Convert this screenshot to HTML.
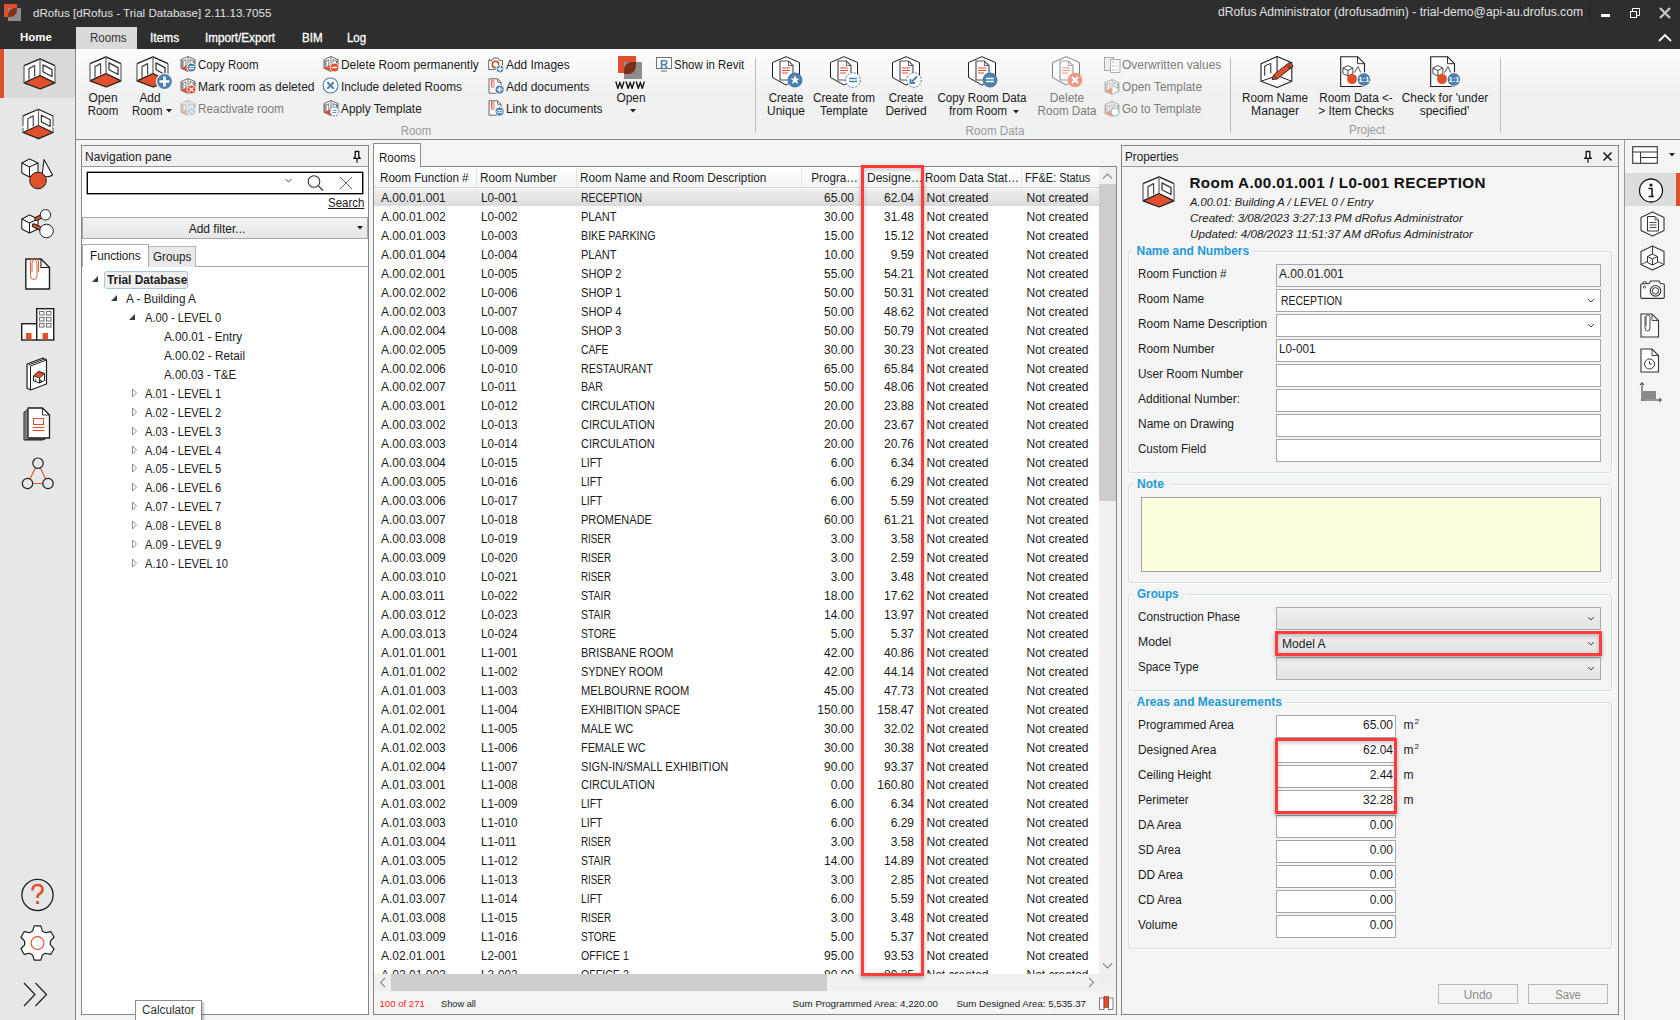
<!DOCTYPE html><html><head><meta charset="utf-8"><title>dRofus</title><style>
*{margin:0;padding:0;box-sizing:border-box}
html,body{width:1680px;height:1020px;overflow:hidden}
body{position:relative;background:#f0f0f0;font-family:"Liberation Sans",sans-serif;font-size:12px;color:#1b1b1b}
.a{position:absolute;white-space:nowrap}
.tb{position:absolute;left:0;top:0;width:1680px;height:49px;background:#2e2e2e}
.sb{position:absolute;left:0;top:49px;width:75px;height:971px;background:#e6e8e7}
.rib{position:absolute;left:76px;top:49px;width:1604px;height:91px;background:linear-gradient(#fdfdfd,#f1f1f1 48%,#f0f1f1);border-bottom:1px solid #858585}
.main{position:absolute;left:76px;top:140px;width:1604px;height:880px;background:#f4f4f4}
.menu{position:absolute;top:30px;color:#fff;font-size:12px}
.rl{color:#1b1b1b;font-size:12px;line-height:13.5px;text-align:center}
.sm{font-size:12px;color:#1b1b1b}
.dis{color:#8c8c8c}
.grp{color:#9a9a9a;font-size:12px}
.vsep{position:absolute;width:1px;background:#bdbdbd}
.panel{position:absolute;border:1px solid #8a8a8a;background:#fff}
.hdr{position:absolute;background:#f0f0f0}
.row{position:absolute;left:0;height:19px;width:100%}
.c{position:absolute;top:3px;white-space:nowrap}
.r{text-align:right}
.lbl{position:absolute;white-space:nowrap;color:#1b1b1b}
.inp{position:absolute;background:#fff;border:1px solid #a6a6a6;height:21px}
.ttl{position:absolute;color:#1d9bd7;font-weight:bold;font-size:12px;white-space:nowrap}
.gb{position:absolute;border:1px solid #d6dfe6;border-radius:3px}
</style></head><body><svg width="0" height="0" style="position:absolute">
<defs>
<symbol id="room" viewBox="0 0 33 32">
<path d="M1 7.7 L17 0.8 L32 7.7 V24.8 L17.2 31 L1 24.8 Z" fill="#fff"/>
<path d="M1 24.8 L17 17.5 L32 24.8 L17.2 31 Z" fill="#e0502c" stroke="#1e1e1e" stroke-width="1.3" stroke-linejoin="round"/>
<path d="M1 7.7 L17 0.8 L32 7.7" fill="none" stroke="#1e1e1e" stroke-width="1.3" stroke-linejoin="round"/>
<path d="M1 7.7 V24.8 M32 7.7 V24.8 M17 0.8 V17.5" fill="none" stroke="#6a6c6c" stroke-width="1.3"/>
<path d="M6 21.6 V10.6 L11.6 7.6 V18.6" fill="none" stroke="#4a4a4a" stroke-width="1.25" stroke-linejoin="round"/>
<path d="M20 6.9 L29 11.6 V18.5 L20 13.8 Z" fill="none" stroke="#333" stroke-width="1.25" stroke-linejoin="round"/>
</symbol>

<symbol id="sroom" viewBox="0 0 16 16">
<path d="M1 3.6 L8 0.6 L15 3.6 V12.4 L8 15.4 L1 12.4 Z" fill="#fff" stroke="#2a2a2a" stroke-width="0.7"/>
<path d="M8 0.6 V9 M3 11 V5 L5.8 3.8 V10 M10 3.5 L13.5 5.2 V9 L10 7.3 Z M2 4 V12 M14 4 V12" fill="none" stroke="#444" stroke-width="0.7"/>
<path d="M1 12.2 L8.3 8.6 V15.3 Z" fill="#e0502c"/>
</symbol>
<symbol id="hexdoc" viewBox="0 0 30 32">
<path d="M15 0.7 L28.5 6.5 V21.5 L15 29 L1.5 21.5 V6.5 Z" fill="#fff" stroke="#1e1e1e" stroke-width="1"/>
<path d="M9 5 H17.5 L22 9.5 V24 H9 Z" fill="#fff" stroke="#555" stroke-width="1.2"/>
<path d="M17.5 5 V9.5 H22" fill="none" stroke="#555" stroke-width="0.9"/>
<path d="M11 12 H19 M11 14.5 H19 M11 17 H17" stroke="#e0502c" stroke-width="1"/>
</symbol>
<symbol id="sdoc" viewBox="0 0 16 16">
<path d="M1 0.8 H9.5 L13 4.3 V15.2 H1 Z" fill="#fff" stroke="#555" stroke-width="0.9"/>
<path d="M9.5 0.8 V4.3 H13" fill="none" stroke="#555" stroke-width="0.8"/>
<path d="M4 8 V2.5 Q5 1 6 2.5 V9 Q5 10.5 3.5 9 V1.5" fill="none" stroke="#e0502c" stroke-width="0.8"/>
</symbol>
<symbol id="bigdoc" viewBox="0 0 32 32">
<path d="M0.7 0.7 H17.5 L24.5 7.7 V30.5 H0.7 Z" fill="#fff" stroke="#1e1e1e" stroke-width="1.1" stroke-linejoin="round"/>
<path d="M17.5 0.7 V7.7 H24.5" fill="none" stroke="#1e1e1e" stroke-width="0.9"/>
<path d="M7.9 9.6 L12.9 12 V17.5 L7.9 20 L2.9 17.5 V12 Z M2.9 12 L7.9 14.5 L12.9 12 M7.9 14.5 V20" fill="#fff" stroke="#333" stroke-width="0.9" stroke-linejoin="round"/>
<path d="M14.3 16.7 L17.9 10.6 L20.7 16.4" fill="none" stroke="#333" stroke-width="0.9"/>
<circle cx="12.1" cy="23.1" r="5" fill="#e0502c"/>
<circle cx="23.9" cy="23.5" r="6.8" fill="#4a7fae" stroke="#fff" stroke-width="1"/>
<text x="23.9" y="26.3" font-family="Liberation Sans" font-size="7.5" font-weight="bold" fill="#fff" text-anchor="middle">1:1</text>
</symbol>
</defs></svg><div class="tb"></div>
<div class="a" style="left:4px;top:4px;width:13px;height:13px;background:#e0502c"></div>
<div class="a" style="left:8px;top:8px;width:13px;height:13px;background:#8d8d8d"></div>
<div class="a" style="left:8px;top:8px;width:9px;height:9px;background:#83301c;border-radius:7px 0 7px 0"></div>
<div class="a " style="left:33px;top:6px;font-size:11.8px;line-height:1.2;color:#e2e2e2;transform:scaleX(0.9834);transform-origin:left">dRofus [dRofus - Trial Database] 2.11.13.7055</div>
<div class="a " style="left:1083px;width:500px;top:5.45px;font-size:12.2px;line-height:1.2;text-align:right;color:#e2e2e2;transform:scaleX(0.9953);transform-origin:right">dRofus Administrator (drofusadmin) - trial-demo@api-au.drofus.com</div>
<div class="a" style="left:1589px;top:5px;width:1px;height:14px;background:#1e1e1e"></div>
<div class="a" style="left:1601px;top:14px;width:9px;height:3px;background:#fff"></div>
<svg class="a" style="left:1629px;top:7px;" width="12" height="12" viewBox="0 0 12 12"><rect x="1.5" y="4.5" width="6" height="6" fill="none" stroke="#fff" stroke-width="1"/><path d="M3.5 4.5 V1.5 H10.5 V8.5 H7.5" fill="none" stroke="#fff" stroke-width="1"/></svg>
<svg class="a" style="left:1658px;top:6px;" width="14" height="14" viewBox="0 0 14 14"><path d="M2 2 L12 12 M12 2 L2 12" stroke="#c9c9c9" stroke-width="2.2"/></svg>
<svg class="a" style="left:1657px;top:31px;" width="16" height="12" viewBox="0 0 16 12"><path d="M2 10 L8 4 L14 10" fill="none" stroke="#fff" stroke-width="1.8"/></svg>
<div class="a " style="left:20px;top:31px;font-size:12px;line-height:1.2;color:#fff;font-weight:bold;font-size:11.5px">Home</div>
<div class="a" style="left:76px;top:27px;width:61px;height:22px;background:#d9dad9"></div>
<div class="a " style="left:89.5px;top:31px;font-size:12px;line-height:1.2;color:#333;transform:scaleX(0.9605);transform-origin:left">Rooms</div>
<div class="a " style="left:150px;top:31px;font-size:12px;line-height:1.2;color:#fff;-webkit-text-stroke:0.3px #fff;transform:scaleX(0.9932);transform-origin:left">Items</div>
<div class="a " style="left:205px;top:31px;font-size:12px;line-height:1.2;color:#fff;-webkit-text-stroke:0.3px #fff;transform:scaleX(0.9722);transform-origin:left">Import/Export</div>
<div class="a " style="left:302px;top:31px;font-size:12px;line-height:1.2;color:#fff;-webkit-text-stroke:0.3px #fff;transform:scaleX(0.9625);transform-origin:left">BIM</div>
<div class="a " style="left:347px;top:31px;font-size:12px;line-height:1.2;color:#fff;-webkit-text-stroke:0.3px #fff;transform:scaleX(0.9550);transform-origin:left">Log</div>
<div class="sb"></div>
<div class="a" style="left:0px;top:49px;width:75px;height:49px;background:#d9dbda"></div>
<div class="a" style="left:0px;top:49px;width:4px;height:49px;background:#e0502c"></div>
<div class="a" style="left:75px;top:49px;width:1px;height:971px;background:#858585"></div>
<svg class="a" style="left:23px;top:58px;" width="33" height="32"><use href="#room"/></svg>
<svg class="a" style="left:22px;top:108px" width="32" height="32" viewBox="0 0 32 32"><use href="#room"/></svg>
<div class="a" style="left:22px;top:113px;width:2px;height:2px;background:#e6e8e7"></div>
<div class="a" style="left:22px;top:126px;width:2px;height:2px;background:#e6e8e7"></div>
<div class="a" style="left:53px;top:113px;width:2px;height:2px;background:#e6e8e7"></div>
<div class="a" style="left:53px;top:126px;width:2px;height:2px;background:#e6e8e7"></div>
<div class="a" style="left:31px;top:108px;width:2px;height:2px;background:#e6e8e7"></div>
<div class="a" style="left:44px;top:108px;width:2px;height:2px;background:#e6e8e7"></div>
<div class="a" style="left:31px;top:137px;width:2px;height:2px;background:#e6e8e7"></div>
<div class="a" style="left:44px;top:137px;width:2px;height:2px;background:#e6e8e7"></div>
<svg class="a" style="left:21px;top:158px;" width="33" height="32" viewBox="0 0 33 32"><path d="M23 1.5 L31.5 17 Q27 20 21 18 Z" fill="#fff" stroke="#1e1e1e" stroke-width="1.1" stroke-linejoin="round"/>
<path d="M8.5 1 L17 5 V15 L8.5 19 L0.8 15 V5 Z" fill="#fff" stroke="#1e1e1e" stroke-width="1.1" stroke-linejoin="round"/>
<path d="M0.8 5 L8.5 9 L17 5 M8.5 9 V19" fill="none" stroke="#1e1e1e" stroke-width="1.1"/>
<circle cx="17" cy="22.5" r="8.3" fill="#e0502c" stroke="#1e1e1e" stroke-width="1"/></svg>
<svg class="a" style="left:21px;top:209px;" width="33" height="32" viewBox="0 0 33 32"><path d="M8.5 6 L17 10 V20 L8.5 24 L0.8 20 V10 Z" fill="#fff" stroke="#1e1e1e" stroke-width="1.1" stroke-linejoin="round"/>
<path d="M0.8 10 L8.5 14 L17 10 M8.5 14 V24" fill="none" stroke="#1e1e1e" stroke-width="1.1"/>
<path d="M15.5 9.8 L22.5 6.5" stroke="#1e1e1e" stroke-width="4.4" stroke-linecap="round"/><path d="M15.5 9.8 L22.5 6.5" stroke="#e0502c" stroke-width="2.4" stroke-linecap="round"/>
<path d="M13 16.5 L21.5 20.5" stroke="#1e1e1e" stroke-width="4.4" stroke-linecap="round"/><path d="M13 16.5 L21.5 20.5" stroke="#e0502c" stroke-width="2.4" stroke-linecap="round"/>
<circle cx="24.5" cy="5.8" r="5.2" fill="#fff" stroke="#1e1e1e" stroke-width="1"/>
<circle cx="25.5" cy="22" r="6.8" fill="#fff" stroke="#1e1e1e" stroke-width="1"/></svg>
<svg class="a" style="left:25px;top:258px;" width="26" height="32" viewBox="0 0 26 32"><path d="M0.8 1 H16 L24.5 9.5 V31 H0.8 Z" fill="#fff" stroke="#1e1e1e" stroke-width="1.4" stroke-linejoin="round"/>
<path d="M16 1 V9.5 H24.5" fill="none" stroke="#1e1e1e" stroke-width="1.1"/>
<path d="M7 14 V5.5 Q7 2.5 9.5 1.5 Q12 2.5 12 5.5 V18 Q12 21.5 9 21.5 Q5.5 21.5 5.5 18 V3.5 Q5.5 0 9.5 -0.5 Q13.5 0 13.5 3.5 V14" fill="none" stroke="#e0502c" stroke-width="0.9"/></svg>
<svg class="a" style="left:21px;top:308px;" width="34" height="33" viewBox="0 0 34 33"><rect x="0.7" y="15.7" width="15" height="16.3" fill="#fff" stroke="#1e1e1e" stroke-width="1.4"/>
<rect x="15.7" y="0.7" width="17" height="31.3" fill="#fff" stroke="#1e1e1e" stroke-width="1.4"/>
<g fill="#fff" stroke="#777" stroke-width="1.1"><rect x="18.5" y="3.5" width="4.5" height="3.5"/><rect x="25.5" y="3.5" width="4.5" height="3.5"/><rect x="18.5" y="9.5" width="4.5" height="3.5"/><rect x="25.5" y="9.5" width="4.5" height="3.5"/><rect x="18.5" y="15.5" width="4.5" height="3.5"/><rect x="25.5" y="15.5" width="4.5" height="3.5"/></g>
<rect x="5" y="25" width="5.5" height="6.5" fill="#e0502c"/><rect x="21.5" y="25" width="5.5" height="6.5" fill="#e0502c"/></svg>
<svg class="a" style="left:26px;top:357px;" width="22" height="34" viewBox="0 0 22 34"><path d="M1 7 L17 1 L20.5 3 V27 L4.5 33 L1 31 Z" fill="#fff" stroke="#1e1e1e" stroke-width="1.2" stroke-linejoin="round"/>
<path d="M4.5 9 L20.5 3 M4.5 9 V33 M2.5 8 L18.5 2" fill="none" stroke="#1e1e1e" stroke-width="1"/>
<path d="M7.5 19 L12.5 14.5 L18.5 16.5 V23.5 L13.5 26 L7.5 24 Z" fill="#fff" stroke="#1e1e1e" stroke-width="1"/>
<path d="M7.5 19 L12.5 14.5 L18.5 16.5 L13.5 21 Z" fill="#e0502c" stroke="#1e1e1e" stroke-width="0.8"/><path d="M13.5 21 V26 M9.8 22 V24" stroke="#1e1e1e" stroke-width="0.9"/><path d="M15 22.5 V25" stroke="#1e1e1e" stroke-width="1.3"/></svg>
<svg class="a" style="left:23px;top:407px;" width="29" height="34" viewBox="0 0 29 34"><path d="M1 5 H5 V30.5 H20 V33 H1 Z" fill="#aaa" stroke="#1e1e1e" stroke-width="1"/>
<path d="M3 3 H5 V31 H22 V32.5 H3 Z" fill="#ccc" stroke="#1e1e1e" stroke-width="0.8"/>
<path d="M5 1 H19.5 L26.5 8 V31 H5 Z" fill="#fff" stroke="#1e1e1e" stroke-width="1.3" stroke-linejoin="round"/>
<path d="M19.5 1 V8 H26.5" fill="none" stroke="#1e1e1e" stroke-width="0.9"/>
<g fill="none" stroke="#e0502c" stroke-width="1"><rect x="10.5" y="11.5" width="10" height="6"/><path d="M9.5 20.5 H21.5 M9.5 23.5 H21.5"/></g></svg>
<svg class="a" style="left:21px;top:457px;" width="34" height="34" viewBox="0 0 34 34"><path d="M14.6 10.8 L8.9 21.9 M19.4 10.8 L24.6 21.9 M11.7 26.5 H21.8" fill="none" stroke="#e0502c" stroke-width="1.1"/>
<g fill="none" stroke="#1e1e1e" stroke-width="1.2"><circle cx="17" cy="6.2" r="5.2"/><circle cx="6.5" cy="26.5" r="5.2"/><circle cx="27" cy="26.5" r="5.2"/></g></svg>
<svg class="a" style="left:21px;top:878px;" width="34" height="34" viewBox="0 0 34 34"><circle cx="16.5" cy="17" r="15.6" fill="none" stroke="#1e1e1e" stroke-width="1.3"/>
<path d="M11.5 12.5 Q11.5 7 16.5 7 Q21.5 7 21.5 11.5 Q21.5 14.5 17.5 16.5 Q16.5 17.2 16.5 20" fill="none" stroke="#e0502c" stroke-width="2.6"/><rect x="15.1" y="23" width="2.8" height="3" fill="#e0502c"/></svg>
<svg class="a" style="left:20px;top:925px;" width="35" height="36" viewBox="0 0 35 36"><path d="M12.68 5.93 L14.19 0.81 L20.81 0.81 L22.32 5.93 L25.54 7.79 L30.73 6.55 L34.04 12.27 L30.37 16.14 L30.37 19.86 L34.04 23.73 L30.73 29.45 L25.54 28.21 L22.32 30.07 L20.81 35.19 L14.19 35.19 L12.68 30.07 L9.46 28.21 L4.27 29.45 L0.96 23.73 L4.63 19.86 L4.63 16.14 L0.96 12.27 L4.27 6.55 L9.46 7.79Z" fill="#fff" stroke="#1e1e1e" stroke-width="1.2" stroke-linejoin="round"/><circle cx="17.5" cy="18" r="6.4" fill="none" stroke="#e0502c" stroke-width="1.1"/></svg>
<svg class="a" style="left:23px;top:982px;" width="27" height="26" viewBox="0 0 27 26"><path d="M1 1 L12 12.5 L1 24 M12.5 1 L23.5 12.5 L12.5 24" fill="none" stroke="#1e1e1e" stroke-width="1.2"/></svg>
<div class="rib"></div>
<div class="main"></div>
<svg class="a" style="left:89px;top:56px;" width="33" height="32"><use href="#room"/></svg>
<div class="a " style="left:-47px;width:300px;top:91.04px;font-size:12px;line-height:1.2;text-align:center;;transform:scaleX(0.9898);transform-origin:center">Open</div>
<div class="a " style="left:-47px;width:300px;top:104.04px;font-size:12px;line-height:1.2;text-align:center;;transform:scaleX(0.9531);transform-origin:center">Room</div>
<svg class="a" style="left:136px;top:56px;" width="33" height="32"><use href="#room"/></svg>
<svg class="a" style="left:155px;top:72px;" width="19" height="19" viewBox="0 0 19 19"><circle cx="9.5" cy="9.5" r="8" fill="#4a7fae" stroke="#fff" stroke-width="1.2"/><path d="M9.5 4.5 V14.5 M4.5 9.5 H14.5" stroke="#fff" stroke-width="2.6"/></svg>
<div class="a " style="left:0px;width:300px;top:91.04px;font-size:12px;line-height:1.2;text-align:center;;transform:scaleX(0.9906);transform-origin:center">Add</div>
<div class="a " style="left:132px;top:104px;font-size:12px;line-height:1.2;;transform:scaleX(0.9531);transform-origin:left">Room</div>
<svg class="a" style="left:166px;top:109px;" width="6" height="4" viewBox="0 0 6 4"><path d="M0 0 H6 L3 3.5Z" fill="#222"/></svg>
<svg class="a" style="left:180px;top:56px;" width="16" height="16"><use href="#sroom"/></svg>
<svg class="a" style="left:186.0px;top:62.0px;" width="11.0" height="11.0" viewBox="0 0 11.0 11.0"><circle cx="5.5" cy="5.5" r="4.5" fill="#4a7fae" stroke="#fff" stroke-width="1"/><path d="M3 4.6 H8 M3 6.6 H8" stroke="#fff" stroke-width="1.1"/></svg>
<div class="a " style="left:198px;top:58px;font-size:12px;line-height:1.2;;transform:scaleX(0.9558);transform-origin:left">Copy Room</div>
<svg class="a" style="left:180px;top:78px;" width="16" height="16"><use href="#sroom"/></svg>
<svg class="a" style="left:186.0px;top:84.0px;" width="11.0" height="11.0" viewBox="0 0 11.0 11.0"><circle cx="5.5" cy="5.5" r="4.5" fill="#e0502c" stroke="#fff" stroke-width="1"/><path d="M3.5 3.5 L7.5 7.5 M7.5 3.5 L3.5 7.5" stroke="#fff" stroke-width="1.2"/></svg>
<div class="a " style="left:198px;top:80px;font-size:12px;line-height:1.2;;transform:scaleX(1.0043);transform-origin:left">Mark room as deleted</div>
<div class="a" style="left:180px;top:100px;opacity:.45"><svg width="16" height="16"><use href="#sroom"/></svg></div>
<svg class="a" style="left:186.0px;top:106.0px;" width="11.0" height="11.0" viewBox="0 0 11.0 11.0"><circle cx="5.5" cy="5.5" r="4.5" fill="#b9cfe0" stroke="#fff" stroke-width="1"/><path d="M3.5 3.5 L7.5 7.5 M7.5 3.5 L3.5 7.5" stroke="#fff" stroke-width="1"/></svg>
<div class="a " style="left:198px;top:102px;font-size:12px;line-height:1.2;color:#7c7c7c;transform:scaleX(0.9828);transform-origin:left">Reactivate room</div>
<svg class="a" style="left:323px;top:56px;" width="16" height="16"><use href="#sroom"/></svg>
<svg class="a" style="left:328.5px;top:62.0px;" width="11.0" height="11.0" viewBox="0 0 11.0 11.0"><circle cx="5.5" cy="5.5" r="4.5" fill="#e0502c" stroke="#fff" stroke-width="1"/><path d="M2.8 5.5 H8.2" stroke="#fff" stroke-width="1.6"/></svg>
<div class="a " style="left:341px;top:58px;font-size:12px;line-height:1.2;;transform:scaleX(0.9878);transform-origin:left">Delete Room permanently</div>
<svg class="a" style="left:322px;top:77px;" width="17" height="17" viewBox="0 0 17 17"><circle cx="8.5" cy="8.5" r="7.5" fill="#fff" stroke="#4a7fae" stroke-width="1.1"/><path d="M5.3 5.3 L11.7 11.7 M11.7 5.3 L5.3 11.7" stroke="#4a7fae" stroke-width="2"/></svg>
<div class="a " style="left:341px;top:80px;font-size:12px;line-height:1.2;;transform:scaleX(0.9861);transform-origin:left">Include deleted Rooms</div>
<svg class="a" style="left:323px;top:100px;" width="16" height="16"><use href="#sroom"/></svg>
<svg class="a" style="left:328.5px;top:106.0px;" width="11.0" height="11.0" viewBox="0 0 11.0 11.0"><circle cx="5.5" cy="5.5" r="4.5" fill="#fff" stroke="#4a7fae" stroke-width="1" stroke-dasharray="2 1.3"/><path d="M3.5 4.5 H7.5 M3.5 6.5 H7.5" stroke="#4a7fae" stroke-width="0.9"/></svg>
<div class="a " style="left:341px;top:102px;font-size:12px;line-height:1.2;;transform:scaleX(0.9866);transform-origin:left">Apply Template</div>
<svg class="a" style="left:488px;top:57px;" width="17" height="16" viewBox="0 0 17 16"><path d="M0.7 3.5 H4 L5.5 1 H10 L11.5 3.5 H14.5 V12.5 H0.7 Z" fill="#fff" stroke="#555" stroke-width="0.9"/><circle cx="7.5" cy="7.5" r="3.2" fill="none" stroke="#c0462a" stroke-width="1.5"/><path d="M1.5 2 V3" stroke="#555"/></svg>
<svg class="a" style="left:495px;top:64.4px;" width="10" height="10" viewBox="0 0 10 10"><circle cx="5" cy="5" r="4" fill="#4a7fae" stroke="#fff" stroke-width="1"/><path d="M5 2.5 V7.5 M2.5 5 H7.5" stroke="#fff" stroke-width="1.4"/></svg>
<div class="a " style="left:506px;top:58px;font-size:12px;line-height:1.2;;transform:scaleX(0.9938);transform-origin:left">Add Images</div>
<svg class="a" style="left:488px;top:78px;" width="16" height="16"><use href="#sdoc"/></svg>
<svg class="a" style="left:494.4px;top:83.9px;" width="11.2" height="11.2" viewBox="0 0 11.2 11.2"><circle cx="5.6" cy="5.6" r="4.6" fill="#4a7fae" stroke="#fff" stroke-width="1"/><path d="M5.6 3 V8.2 M3 5.6 H8.2" stroke="#fff" stroke-width="1.5"/></svg>
<div class="a " style="left:506px;top:80px;font-size:12px;line-height:1.2;">Add documents</div>
<svg class="a" style="left:488px;top:100px;" width="16" height="16"><use href="#sdoc"/></svg>
<svg class="a" style="left:494.4px;top:105.9px;" width="11.2" height="11.2" viewBox="0 0 11.2 11.2"><circle cx="5.6" cy="5.6" r="4.6" fill="#4a7fae" stroke="#fff" stroke-width="1"/><circle cx="4.2" cy="5.6" r="1.4" fill="none" stroke="#fff" stroke-width="0.9"/><circle cx="7" cy="5.6" r="1.4" fill="none" stroke="#fff" stroke-width="0.9"/></svg>
<div class="a " style="left:506px;top:102px;font-size:12px;line-height:1.2;;transform:scaleX(0.9908);transform-origin:left">Link to documents</div>
<div class="a" style="left:618px;top:56px;width:18px;height:17px;background:#e0502c"></div>
<div class="a" style="left:624px;top:62px;width:18px;height:17px;background:#8d8d8d"></div>
<div class="a" style="left:624px;top:62px;width:12px;height:12px;background:#7c2c19;border-radius:8px 0 8px 0"></div>
<svg class="a" style="left:615px;top:81px;" width="32" height="8" viewBox="0 0 32 8"><path d="M0.8 0.5 L2.9 7.3 L4.9 1.6 L6.9 7.3 L9.0 0.5" fill="none" stroke="#111" stroke-width="1.35" stroke-linejoin="miter"/><path d="M11.0 0.5 L13.1 7.3 L15.1 1.6 L17.1 7.3 L19.2 0.5" fill="none" stroke="#111" stroke-width="1.35" stroke-linejoin="miter"/><path d="M21.2 0.5 L23.299999999999997 7.3 L25.299999999999997 1.6 L27.299999999999997 7.3 L29.4 0.5" fill="none" stroke="#111" stroke-width="1.35" stroke-linejoin="miter"/></svg>
<div class="a " style="left:481px;width:300px;top:91.04px;font-size:12px;line-height:1.2;text-align:center;;transform:scaleX(0.9898);transform-origin:center">Open</div>
<svg class="a" style="left:630px;top:109px;" width="6" height="4" viewBox="0 0 6 4"><path d="M0 0 H6 L3 3.5Z" fill="#222"/></svg>
<svg class="a" style="left:656px;top:57px;" width="16" height="15" viewBox="0 0 16 15"><rect x="0.5" y="0.5" width="15" height="11" fill="#fff" stroke="#666" stroke-width="0.9"/><path d="M5 14 H11" stroke="#666"/><text x="8" y="10.5" font-family="Liberation Sans" font-size="11" font-weight="bold" fill="#4a7fae" text-anchor="middle">R</text></svg>
<div class="a " style="left:674px;top:58px;font-size:12px;line-height:1.2;;transform:scaleX(0.9564);transform-origin:left">Show in Revit</div>
<div class="vsep" style="left:755px;top:58px;height:75px"></div>
<div class="a grp" style="left:266px;width:300px;top:123.64px;font-size:12px;line-height:1.2;text-align:center;;transform:scaleX(0.9531);transform-origin:center">Room</div>
<svg class="a" style="left:771px;top:56px;" width="30" height="32"><use href="#hexdoc"/></svg>
<svg class="a" style="left:786.5px;top:71.5px;" width="16" height="16" viewBox="0 0 16 16"><circle cx="8" cy="8" r="7.5" fill="#4a7fae"/><path d="M8 3 L9.3 6.4 L12.8 6.4 L10 8.6 L11 12 L8 10 L5 12 L6 8.6 L3.2 6.4 L6.7 6.4 Z" fill="#fff"/></svg>
<div class="a " style="left:636px;width:300px;top:91.04px;font-size:12px;line-height:1.2;text-align:center;;transform:scaleX(0.9639);transform-origin:center">Create</div>
<div class="a " style="left:636px;width:300px;top:104.04px;font-size:12px;line-height:1.2;text-align:center;;transform:scaleX(0.9947);transform-origin:center">Unique</div>
<svg class="a" style="left:829px;top:56px;" width="30" height="32"><use href="#hexdoc"/></svg>
<svg class="a" style="left:844.5px;top:71.5px;" width="16" height="16" viewBox="0 0 16 16"><circle cx="8" cy="8" r="7.3" fill="#fff" stroke="#4a7fae" stroke-width="1" stroke-dasharray="2.2 1.3"/><path d="M4 6.5 H12 M4 9.5 H12" stroke="#4a7fae" stroke-width="1.6"/></svg>
<div class="a " style="left:694px;width:300px;top:91.04px;font-size:12px;line-height:1.2;text-align:center;;transform:scaleX(0.9795);transform-origin:center">Create from</div>
<div class="a " style="left:694px;width:300px;top:104.04px;font-size:12px;line-height:1.2;text-align:center;;transform:scaleX(0.9815);transform-origin:center">Template</div>
<svg class="a" style="left:890.5px;top:56px;" width="30" height="32"><use href="#hexdoc"/></svg>
<svg class="a" style="left:906.0px;top:71.5px;" width="16" height="16" viewBox="0 0 16 16"><circle cx="8" cy="8" r="7.3" fill="#fff" stroke="#4a7fae" stroke-width="1" stroke-dasharray="2.2 1.3"/><path d="M11 4.5 L6 9.5 M4.5 7 V11 H9" stroke="#4a7fae" stroke-width="1.8" fill="none"/></svg>
<div class="a " style="left:755.5px;width:300px;top:91.04px;font-size:12px;line-height:1.2;text-align:center;;transform:scaleX(0.9639);transform-origin:center">Create</div>
<div class="a " style="left:755.5px;width:300px;top:104.04px;font-size:12px;line-height:1.2;text-align:center;;transform:scaleX(0.9952);transform-origin:center">Derived</div>
<svg class="a" style="left:966.5px;top:56px;" width="30" height="32"><use href="#hexdoc"/></svg>
<svg class="a" style="left:982.0px;top:71.5px;" width="16" height="16" viewBox="0 0 16 16"><circle cx="8" cy="8" r="7.5" fill="#4a7fae"/><path d="M4 6.5 H12 M4 9.5 H12" stroke="#fff" stroke-width="1.6"/></svg>
<div class="a " style="left:831.5px;width:300px;top:91.04px;font-size:12px;line-height:1.2;text-align:center;;transform:scaleX(0.9674);transform-origin:center">Copy Room Data</div>
<div class="a " style="left:827.5px;width:300px;top:104.04px;font-size:12px;line-height:1.2;text-align:center;;transform:scaleX(0.9747);transform-origin:center">from Room</div>
<svg class="a" style="left:1013px;top:110px;" width="6" height="4" viewBox="0 0 6 4"><path d="M0 0 H6 L3 3.5Z" fill="#222"/></svg>
<div class="a" style="left:1051px;top:56px;opacity:.55"><svg width="30" height="32" viewBox="0 0 30 32"><use href="#hexdoc"/></svg></div>
<svg class="a" style="left:1067px;top:72px;" width="16" height="16" viewBox="0 0 16 16"><circle cx="8" cy="8" r="7.3" fill="#ec9a88"/><path d="M5 5 L11 11 M11 5 L5 11" stroke="#fff" stroke-width="2"/></svg>
<div class="a " style="left:916.5px;width:300px;top:91.04px;font-size:12px;line-height:1.2;text-align:center;color:#7c7c7c;transform:scaleX(0.9942);transform-origin:center">Delete</div>
<div class="a " style="left:916.5px;width:300px;top:104.04px;font-size:12px;line-height:1.2;text-align:center;color:#7c7c7c;transform:scaleX(0.9720);transform-origin:center">Room Data</div>
<svg class="a" style="left:1104px;top:57px;" width="17" height="16" viewBox="0 0 17 16"><rect x="0.5" y="0.5" width="9" height="13" fill="#eee" stroke="#999" stroke-width="0.8"/><rect x="6.5" y="2.5" width="9.5" height="13" fill="#fff" stroke="#999" stroke-width="0.8"/><path d="M8.5 5 H10 M8.5 9 H10 M8.5 13 H10" stroke="#e9a393" stroke-width="1.3"/><path d="M11.5 5 H14 M11.5 9 H14 M11.5 13 H14" stroke="#ccc" stroke-width="0.8"/></svg>
<div class="a " style="left:1122px;top:58px;font-size:12px;line-height:1.2;color:#7c7c7c">Overwritten values</div>
<div class="a" style="left:1104px;top:79px;opacity:.5"><svg width="16" height="16"><use href="#sroom"/></svg></div>
<div class="a " style="left:1122px;top:80px;font-size:12px;line-height:1.2;color:#7c7c7c;transform:scaleX(0.9852);transform-origin:left">Open Template</div>
<div class="a" style="left:1104px;top:101px;opacity:.5"><svg width="16" height="16"><use href="#sroom"/></svg></div>
<svg class="a" style="left:1110px;top:107px;" width="10" height="10" viewBox="0 0 10 10"><circle cx="5" cy="5" r="4" fill="#fff" stroke="#9bb8d0" stroke-width="1"/></svg>
<div class="a " style="left:1122px;top:102px;font-size:12px;line-height:1.2;color:#7c7c7c;transform:scaleX(0.9754);transform-origin:left">Go to Template</div>
<div class="a grp" style="left:844.5px;width:300px;top:123.64px;font-size:12px;line-height:1.2;text-align:center;;transform:scaleX(0.9720);transform-origin:center">Room Data</div>
<div class="vsep" style="left:1230px;top:58px;height:75px"></div>
<svg class="a" style="left:1260px;top:56px;" width="34" height="32" viewBox="0 0 34 32"><path d="M1 7.8 L17.1 0.5 L31.8 6.7 V25.3 L17.1 31.4 L1 25.3 Z" fill="#fff" stroke="#1e1e1e" stroke-width="1.1" stroke-linejoin="round"/>
<path d="M1 25.3 L17.1 19.6 L31.8 25.3 M17.1 0.5 V19.6" fill="none" stroke="#1e1e1e" stroke-width="1"/><path d="M17.1 1 V19" stroke="#777" stroke-width="1"/>
<path d="M4.7 19.6 V9.9 L10.8 7.4 V17.4" fill="none" stroke="#1e1e1e" stroke-width="1"/>
<path d="M12.1 23.5 L16.9 23.1 L33.2 10.3 L29.8 6.1 L13.6 18.9 Z" fill="#e0502c" stroke="#1e1e1e" stroke-width="0.9" stroke-linejoin="round"/>
<path d="M13.6 18.9 L16.9 23.1 M28.4 8.6 L31.3 12.2 M27.1 9.6 L30 13.2" fill="none" stroke="#1e1e1e" stroke-width="0.8"/></svg>
<div class="a " style="left:1125px;width:300px;top:91.04px;font-size:12px;line-height:1.2;text-align:center;;transform:scaleX(0.9807);transform-origin:center">Room Name</div>
<div class="a " style="left:1125px;width:300px;top:104.04px;font-size:12px;line-height:1.2;text-align:center;;transform:scaleX(1.0106);transform-origin:center">Manager</div>
<svg class="a" style="left:1340px;top:56px;" width="32" height="32"><use href="#bigdoc"/></svg>
<div class="a " style="left:1205.5px;width:300px;top:91.04px;font-size:12px;line-height:1.2;text-align:center;;transform:scaleX(0.9773);transform-origin:center">Room Data &lt;-</div>
<div class="a " style="left:1205.5px;width:300px;top:104.04px;font-size:12px;line-height:1.2;text-align:center;;transform:scaleX(0.9805);transform-origin:center">&gt; Item Checks</div>
<svg class="a" style="left:1430px;top:56px;" width="32" height="32"><use href="#bigdoc"/></svg>
<div class="a " style="left:1294.5px;width:300px;top:91.04px;font-size:12px;line-height:1.2;text-align:center;;transform:scaleX(0.9852);transform-origin:center">Check for &#x27;under</div>
<div class="a " style="left:1294.5px;width:300px;top:104.04px;font-size:12px;line-height:1.2;text-align:center;">specified&#x27;</div>
<div class="a grp" style="left:1216.5px;width:300px;top:122.64px;font-size:12px;line-height:1.2;text-align:center;;transform:scaleX(0.9652);transform-origin:center">Project</div>
<div class="vsep" style="left:1500px;top:58px;height:75px"></div>
<div class="a" style="left:81px;top:145px;width:288px;height:870px;background:#fff;border:1px solid #858585"></div>
<div class="a" style="left:82px;top:146px;width:286px;height:21px;background:#f0f0f0;border-bottom:1px solid #9a9a9a"></div>
<div class="a " style="left:85px;top:150px;font-size:12px;line-height:1.2;">Navigation pane</div>
<svg class="a" style="left:352px;top:150px;" width="10" height="13" viewBox="0 0 10 13"><path d="M3.2 1.5 H6.8 V7 L8.3 8.3 H1.7 L3.2 7 Z" fill="#fff" stroke="#111" stroke-width="1.3" stroke-linejoin="round"/><path d="M5 8.5 V12.8" stroke="#111" stroke-width="1.2"/></svg>
<div class="a" style="left:87px;top:172px;width:276px;height:22px;background:#fff;border:1px solid #000;box-shadow:0 0 0 0.4px #000"></div>
<svg class="a" style="left:284px;top:176px;" width="9" height="9" viewBox="0 0 9 9"><path d="M1.5 3 L4.5 6 L7.5 3" fill="none" stroke="#444" stroke-width="1"/></svg>
<svg class="a" style="left:306px;top:174px;" width="20" height="18" viewBox="0 0 20 18"><circle cx="8" cy="7.5" r="5.8" fill="none" stroke="#333" stroke-width="1.1"/><path d="M12.2 11.7 L17 16.5" stroke="#333" stroke-width="1.2"/></svg>
<svg class="a" style="left:338px;top:175px;" width="16" height="16" viewBox="0 0 16 16"><path d="M2 2 L14 14 M14 2 L2 14" stroke="#555" stroke-width="0.9"/></svg>
<div class="a " style="left:328px;top:196px;font-size:12px;line-height:1.2;text-decoration:underline;transform:scaleX(0.9553);transform-origin:left">Search</div>
<div class="a" style="left:82px;top:217px;width:286px;height:22px;background:linear-gradient(#f4f4f4,#e6e6e6);border:1px solid #a9a9a9"></div>
<div class="a " style="left:67px;width:300px;top:221.64px;font-size:12px;line-height:1.2;text-align:center;">Add filter...</div>
<svg class="a" style="left:357px;top:226px;" width="6" height="4" viewBox="0 0 6 4"><path d="M0 0 H6 L3 3.5Z" fill="#222"/></svg>
<div class="a" style="left:82px;top:266px;width:286px;height:1px;background:#a9a9a9"></div>
<div class="a" style="left:148px;top:246px;width:48px;height:21px;background:#e9e9e9;border:1px solid #b5b5b5;border-bottom:none"></div>
<div class="a" style="left:82px;top:244px;width:67px;height:23px;background:#fff;border:1px solid #a9a9a9;border-bottom:none"></div>
<div class="a " style="left:90px;top:249px;font-size:12px;line-height:1.2;;transform:scaleX(0.9750);transform-origin:left">Functions</div>
<div class="a " style="left:153px;top:250px;font-size:12px;line-height:1.2;;transform:scaleX(0.9720);transform-origin:left">Groups</div>
<div class="a" style="left:104px;top:271px;width:84px;height:18px;background:#efefef;border:1px solid #a6c5e6;border-radius:3px"></div>
<div class="a " style="left:107px;top:273px;font-size:12px;line-height:1.2;font-weight:bold;transform:scaleX(0.9865);transform-origin:left">Trial Database</div>
<svg class="a" style="left:91px;top:275px;" width="8" height="8" viewBox="0 0 8 8"><path d="M7 1 V7 H1 Z" fill="#3a3a3a"/></svg>
<div class="a " style="left:125.5px;top:292px;font-size:12px;line-height:1.2;;transform:scaleX(0.9790);transform-origin:left">A - Building A</div>
<svg class="a" style="left:110px;top:294px;" width="8" height="8" viewBox="0 0 8 8"><path d="M7 1 V7 H1 Z" fill="#3a3a3a"/></svg>
<div class="a " style="left:144.5px;top:311px;font-size:12px;line-height:1.2;;transform:scaleX(0.9259);transform-origin:left">A.00 - LEVEL 0</div>
<svg class="a" style="left:128px;top:313px;" width="8" height="8" viewBox="0 0 8 8"><path d="M7 1 V7 H1 Z" fill="#3a3a3a"/></svg>
<div class="a " style="left:164px;top:330px;font-size:12px;line-height:1.2;;transform:scaleX(0.9750);transform-origin:left">A.00.01 - Entry</div>
<div class="a " style="left:164px;top:349px;font-size:12px;line-height:1.2;;transform:scaleX(0.9794);transform-origin:left">A.00.02 - Retail</div>
<div class="a " style="left:164px;top:368px;font-size:12px;line-height:1.2;;transform:scaleX(0.9614);transform-origin:left">A.00.03 - T&amp;E</div>
<div class="a " style="left:144.5px;top:387px;font-size:12px;line-height:1.2;;transform:scaleX(0.9259);transform-origin:left">A.01 - LEVEL 1</div>
<svg class="a" style="left:131px;top:388px;" width="8" height="10" viewBox="0 0 8 10"><path d="M1.5 1 L5.5 5 L1.5 9 Z" fill="none" stroke="#8a8a8a" stroke-width="1"/></svg>
<div class="a " style="left:144.5px;top:406px;font-size:12px;line-height:1.2;;transform:scaleX(0.9259);transform-origin:left">A.02 - LEVEL 2</div>
<svg class="a" style="left:131px;top:407px;" width="8" height="10" viewBox="0 0 8 10"><path d="M1.5 1 L5.5 5 L1.5 9 Z" fill="none" stroke="#8a8a8a" stroke-width="1"/></svg>
<div class="a " style="left:144.5px;top:425px;font-size:12px;line-height:1.2;;transform:scaleX(0.9259);transform-origin:left">A.03 - LEVEL 3</div>
<svg class="a" style="left:131px;top:426px;" width="8" height="10" viewBox="0 0 8 10"><path d="M1.5 1 L5.5 5 L1.5 9 Z" fill="none" stroke="#8a8a8a" stroke-width="1"/></svg>
<div class="a " style="left:144.5px;top:444px;font-size:12px;line-height:1.2;;transform:scaleX(0.9259);transform-origin:left">A.04 - LEVEL 4</div>
<svg class="a" style="left:131px;top:445px;" width="8" height="10" viewBox="0 0 8 10"><path d="M1.5 1 L5.5 5 L1.5 9 Z" fill="none" stroke="#8a8a8a" stroke-width="1"/></svg>
<div class="a " style="left:144.5px;top:462px;font-size:12px;line-height:1.2;;transform:scaleX(0.9259);transform-origin:left">A.05 - LEVEL 5</div>
<svg class="a" style="left:131px;top:463px;" width="8" height="10" viewBox="0 0 8 10"><path d="M1.5 1 L5.5 5 L1.5 9 Z" fill="none" stroke="#8a8a8a" stroke-width="1"/></svg>
<div class="a " style="left:144.5px;top:481px;font-size:12px;line-height:1.2;;transform:scaleX(0.9259);transform-origin:left">A.06 - LEVEL 6</div>
<svg class="a" style="left:131px;top:482px;" width="8" height="10" viewBox="0 0 8 10"><path d="M1.5 1 L5.5 5 L1.5 9 Z" fill="none" stroke="#8a8a8a" stroke-width="1"/></svg>
<div class="a " style="left:144.5px;top:500px;font-size:12px;line-height:1.2;;transform:scaleX(0.9259);transform-origin:left">A.07 - LEVEL 7</div>
<svg class="a" style="left:131px;top:501px;" width="8" height="10" viewBox="0 0 8 10"><path d="M1.5 1 L5.5 5 L1.5 9 Z" fill="none" stroke="#8a8a8a" stroke-width="1"/></svg>
<div class="a " style="left:144.5px;top:519px;font-size:12px;line-height:1.2;;transform:scaleX(0.9259);transform-origin:left">A.08 - LEVEL 8</div>
<svg class="a" style="left:131px;top:520px;" width="8" height="10" viewBox="0 0 8 10"><path d="M1.5 1 L5.5 5 L1.5 9 Z" fill="none" stroke="#8a8a8a" stroke-width="1"/></svg>
<div class="a " style="left:144.5px;top:538px;font-size:12px;line-height:1.2;;transform:scaleX(0.9259);transform-origin:left">A.09 - LEVEL 9</div>
<svg class="a" style="left:131px;top:539px;" width="8" height="10" viewBox="0 0 8 10"><path d="M1.5 1 L5.5 5 L1.5 9 Z" fill="none" stroke="#8a8a8a" stroke-width="1"/></svg>
<div class="a " style="left:144.5px;top:557px;font-size:12px;line-height:1.2;;transform:scaleX(0.9314);transform-origin:left">A.10 - LEVEL 10</div>
<svg class="a" style="left:131px;top:558px;" width="8" height="10" viewBox="0 0 8 10"><path d="M1.5 1 L5.5 5 L1.5 9 Z" fill="none" stroke="#8a8a8a" stroke-width="1"/></svg>
<div class="a" style="left:135px;top:1000px;width:67px;height:22px;background:#fff;border:1px solid #8c8c8c;box-shadow:2px 2px 2px rgba(0,0,0,.25)"></div>
<div class="a " style="left:142px;top:1003px;font-size:12px;line-height:1.2;color:#333;transform:scaleX(0.9759);transform-origin:left">Calculator</div>
<div class="a" style="left:373px;top:166px;width:744px;height:849px;background:#fff;border:1px solid #858585"></div>
<div class="a" style="left:373px;top:143px;width:48px;height:24px;background:#fff;border:1px solid #8c8c8c;border-bottom:none"></div>
<div class="a " style="left:379px;top:151px;font-size:12px;line-height:1.2;;transform:scaleX(0.9605);transform-origin:left">Rooms</div>
<div class="a" style="left:374px;top:167px;width:725px;height:21px;background:linear-gradient(#fff,#f3f5f6);border-bottom:1px solid #d6d6d6"></div>
<div class="a" style="left:476px;top:168px;width:1px;height:18px;background:#e2e2e2"></div>
<div class="a" style="left:576px;top:168px;width:1px;height:18px;background:#e2e2e2"></div>
<div class="a" style="left:801px;top:168px;width:1px;height:18px;background:#e2e2e2"></div>
<div class="a" style="left:862px;top:168px;width:1px;height:18px;background:#e2e2e2"></div>
<div class="a" style="left:921px;top:168px;width:1px;height:18px;background:#e2e2e2"></div>
<div class="a" style="left:1021px;top:168px;width:1px;height:18px;background:#e2e2e2"></div>
<div class="a " style="left:380px;top:171px;font-size:12px;line-height:1.2;;transform:scaleX(0.9694);transform-origin:left">Room Function #</div>
<div class="a " style="left:480px;top:171px;font-size:12px;line-height:1.2;;transform:scaleX(0.9833);transform-origin:left">Room Number</div>
<div class="a " style="left:579.5px;top:171px;font-size:12px;line-height:1.2;;transform:scaleX(0.9842);transform-origin:left">Room Name and Room Description</div>
<div class="a " style="left:357.5px;width:500px;top:170.64px;font-size:12px;line-height:1.2;text-align:right;;transform:scaleX(0.9729);transform-origin:right">Progra…</div>
<div class="a " style="left:867px;top:171px;font-size:12px;line-height:1.2;">Designe…</div>
<div class="a " style="left:924.5px;top:171px;font-size:12px;line-height:1.2;;transform:scaleX(0.9651);transform-origin:left">Room Data Stat…</div>
<div class="a " style="left:1024.5px;top:171px;font-size:12px;line-height:1.2;;transform:scaleX(0.9145);transform-origin:left">FF&amp;E: Status</div>
<div class="a" style="left:374px;top:188px;width:725px;height:786px;overflow:hidden">
<div class="a" style="left:0px;top:0.5px;width:725px;height:17px;background:linear-gradient(#efefef,#e4e4e4 60%,#d9d9d9)"></div>
<div class="a " style="left:7px;top:3px;font-size:12px;line-height:1.2;">A.00.01.001</div>
<div class="a " style="left:107px;top:3px;font-size:12px;line-height:1.2;;transform:scaleX(0.9759);transform-origin:left">L0-001</div>
<div class="a " style="left:206.5px;top:3px;font-size:12px;line-height:1.2;;transform:scaleX(0.8729);transform-origin:left">RECEPTION</div>
<div class="a " style="left:-20px;width:500px;top:3.00px;font-size:12px;line-height:1.2;text-align:right;">65.00</div>
<div class="a " style="left:40px;width:500px;top:3.00px;font-size:12px;line-height:1.2;text-align:right;">62.04</div>
<div class="a " style="left:552.5px;top:3px;font-size:12px;line-height:1.2;">Not created</div>
<div class="a " style="left:652.5px;top:3px;font-size:12px;line-height:1.2;">Not created</div>
<div class="a " style="left:7px;top:22px;font-size:12px;line-height:1.2;">A.00.01.002</div>
<div class="a " style="left:107px;top:22px;font-size:12px;line-height:1.2;;transform:scaleX(0.9759);transform-origin:left">L0-002</div>
<div class="a " style="left:206.5px;top:22px;font-size:12px;line-height:1.2;;transform:scaleX(0.9199);transform-origin:left">PLANT</div>
<div class="a " style="left:-20px;width:500px;top:22.00px;font-size:12px;line-height:1.2;text-align:right;">30.00</div>
<div class="a " style="left:40px;width:500px;top:22.00px;font-size:12px;line-height:1.2;text-align:right;">31.48</div>
<div class="a " style="left:552.5px;top:22px;font-size:12px;line-height:1.2;">Not created</div>
<div class="a " style="left:652.5px;top:22px;font-size:12px;line-height:1.2;">Not created</div>
<div class="a " style="left:7px;top:41px;font-size:12px;line-height:1.2;">A.00.01.003</div>
<div class="a " style="left:107px;top:41px;font-size:12px;line-height:1.2;;transform:scaleX(0.9759);transform-origin:left">L0-003</div>
<div class="a " style="left:206.5px;top:41px;font-size:12px;line-height:1.2;;transform:scaleX(0.8902);transform-origin:left">BIKE PARKING</div>
<div class="a " style="left:-20px;width:500px;top:41.00px;font-size:12px;line-height:1.2;text-align:right;">15.00</div>
<div class="a " style="left:40px;width:500px;top:41.00px;font-size:12px;line-height:1.2;text-align:right;">15.12</div>
<div class="a " style="left:552.5px;top:41px;font-size:12px;line-height:1.2;">Not created</div>
<div class="a " style="left:652.5px;top:41px;font-size:12px;line-height:1.2;">Not created</div>
<div class="a " style="left:7px;top:60px;font-size:12px;line-height:1.2;">A.00.01.004</div>
<div class="a " style="left:107px;top:60px;font-size:12px;line-height:1.2;;transform:scaleX(0.9759);transform-origin:left">L0-004</div>
<div class="a " style="left:206.5px;top:60px;font-size:12px;line-height:1.2;;transform:scaleX(0.9199);transform-origin:left">PLANT</div>
<div class="a " style="left:-20px;width:500px;top:60.00px;font-size:12px;line-height:1.2;text-align:right;">10.00</div>
<div class="a " style="left:40px;width:500px;top:60.00px;font-size:12px;line-height:1.2;text-align:right;">9.59</div>
<div class="a " style="left:552.5px;top:60px;font-size:12px;line-height:1.2;">Not created</div>
<div class="a " style="left:652.5px;top:60px;font-size:12px;line-height:1.2;">Not created</div>
<div class="a " style="left:7px;top:79px;font-size:12px;line-height:1.2;">A.00.02.001</div>
<div class="a " style="left:107px;top:79px;font-size:12px;line-height:1.2;;transform:scaleX(0.9759);transform-origin:left">L0-005</div>
<div class="a " style="left:206.5px;top:79px;font-size:12px;line-height:1.2;;transform:scaleX(0.9224);transform-origin:left">SHOP 2</div>
<div class="a " style="left:-20px;width:500px;top:79.00px;font-size:12px;line-height:1.2;text-align:right;">55.00</div>
<div class="a " style="left:40px;width:500px;top:79.00px;font-size:12px;line-height:1.2;text-align:right;">54.21</div>
<div class="a " style="left:552.5px;top:79px;font-size:12px;line-height:1.2;">Not created</div>
<div class="a " style="left:652.5px;top:79px;font-size:12px;line-height:1.2;">Not created</div>
<div class="a " style="left:7px;top:98px;font-size:12px;line-height:1.2;">A.00.02.002</div>
<div class="a " style="left:107px;top:98px;font-size:12px;line-height:1.2;;transform:scaleX(0.9759);transform-origin:left">L0-006</div>
<div class="a " style="left:206.5px;top:98px;font-size:12px;line-height:1.2;;transform:scaleX(0.9224);transform-origin:left">SHOP 1</div>
<div class="a " style="left:-20px;width:500px;top:98.00px;font-size:12px;line-height:1.2;text-align:right;">50.00</div>
<div class="a " style="left:40px;width:500px;top:98.00px;font-size:12px;line-height:1.2;text-align:right;">50.31</div>
<div class="a " style="left:552.5px;top:98px;font-size:12px;line-height:1.2;">Not created</div>
<div class="a " style="left:652.5px;top:98px;font-size:12px;line-height:1.2;">Not created</div>
<div class="a " style="left:7px;top:117px;font-size:12px;line-height:1.2;">A.00.02.003</div>
<div class="a " style="left:107px;top:117px;font-size:12px;line-height:1.2;;transform:scaleX(0.9759);transform-origin:left">L0-007</div>
<div class="a " style="left:206.5px;top:117px;font-size:12px;line-height:1.2;;transform:scaleX(0.9224);transform-origin:left">SHOP 4</div>
<div class="a " style="left:-20px;width:500px;top:117.00px;font-size:12px;line-height:1.2;text-align:right;">50.00</div>
<div class="a " style="left:40px;width:500px;top:117.00px;font-size:12px;line-height:1.2;text-align:right;">48.62</div>
<div class="a " style="left:552.5px;top:117px;font-size:12px;line-height:1.2;">Not created</div>
<div class="a " style="left:652.5px;top:117px;font-size:12px;line-height:1.2;">Not created</div>
<div class="a " style="left:7px;top:136px;font-size:12px;line-height:1.2;">A.00.02.004</div>
<div class="a " style="left:107px;top:136px;font-size:12px;line-height:1.2;;transform:scaleX(0.9759);transform-origin:left">L0-008</div>
<div class="a " style="left:206.5px;top:136px;font-size:12px;line-height:1.2;;transform:scaleX(0.9224);transform-origin:left">SHOP 3</div>
<div class="a " style="left:-20px;width:500px;top:136.00px;font-size:12px;line-height:1.2;text-align:right;">50.00</div>
<div class="a " style="left:40px;width:500px;top:136.00px;font-size:12px;line-height:1.2;text-align:right;">50.79</div>
<div class="a " style="left:552.5px;top:136px;font-size:12px;line-height:1.2;">Not created</div>
<div class="a " style="left:652.5px;top:136px;font-size:12px;line-height:1.2;">Not created</div>
<div class="a " style="left:7px;top:155px;font-size:12px;line-height:1.2;">A.00.02.005</div>
<div class="a " style="left:107px;top:155px;font-size:12px;line-height:1.2;;transform:scaleX(0.9759);transform-origin:left">L0-009</div>
<div class="a " style="left:206.5px;top:155px;font-size:12px;line-height:1.2;;transform:scaleX(0.8563);transform-origin:left">CAFE</div>
<div class="a " style="left:-20px;width:500px;top:155.00px;font-size:12px;line-height:1.2;text-align:right;">30.00</div>
<div class="a " style="left:40px;width:500px;top:155.00px;font-size:12px;line-height:1.2;text-align:right;">30.23</div>
<div class="a " style="left:552.5px;top:155px;font-size:12px;line-height:1.2;">Not created</div>
<div class="a " style="left:652.5px;top:155px;font-size:12px;line-height:1.2;">Not created</div>
<div class="a " style="left:7px;top:174px;font-size:12px;line-height:1.2;">A.00.02.006</div>
<div class="a " style="left:107px;top:174px;font-size:12px;line-height:1.2;;transform:scaleX(0.9759);transform-origin:left">L0-010</div>
<div class="a " style="left:206.5px;top:174px;font-size:12px;line-height:1.2;;transform:scaleX(0.8919);transform-origin:left">RESTAURANT</div>
<div class="a " style="left:-20px;width:500px;top:174.00px;font-size:12px;line-height:1.2;text-align:right;">65.00</div>
<div class="a " style="left:40px;width:500px;top:174.00px;font-size:12px;line-height:1.2;text-align:right;">65.84</div>
<div class="a " style="left:552.5px;top:174px;font-size:12px;line-height:1.2;">Not created</div>
<div class="a " style="left:652.5px;top:174px;font-size:12px;line-height:1.2;">Not created</div>
<div class="a " style="left:7px;top:192px;font-size:12px;line-height:1.2;">A.00.02.007</div>
<div class="a " style="left:107px;top:192px;font-size:12px;line-height:1.2;;transform:scaleX(0.9753);transform-origin:left">L0-011</div>
<div class="a " style="left:206.5px;top:192px;font-size:12px;line-height:1.2;;transform:scaleX(0.8865);transform-origin:left">BAR</div>
<div class="a " style="left:-20px;width:500px;top:192.00px;font-size:12px;line-height:1.2;text-align:right;">50.00</div>
<div class="a " style="left:40px;width:500px;top:192.00px;font-size:12px;line-height:1.2;text-align:right;">48.06</div>
<div class="a " style="left:552.5px;top:192px;font-size:12px;line-height:1.2;">Not created</div>
<div class="a " style="left:652.5px;top:192px;font-size:12px;line-height:1.2;">Not created</div>
<div class="a " style="left:7px;top:211px;font-size:12px;line-height:1.2;">A.00.03.001</div>
<div class="a " style="left:107px;top:211px;font-size:12px;line-height:1.2;;transform:scaleX(0.9759);transform-origin:left">L0-012</div>
<div class="a " style="left:206.5px;top:211px;font-size:12px;line-height:1.2;;transform:scaleX(0.9155);transform-origin:left">CIRCULATION</div>
<div class="a " style="left:-20px;width:500px;top:211.00px;font-size:12px;line-height:1.2;text-align:right;">20.00</div>
<div class="a " style="left:40px;width:500px;top:211.00px;font-size:12px;line-height:1.2;text-align:right;">23.88</div>
<div class="a " style="left:552.5px;top:211px;font-size:12px;line-height:1.2;">Not created</div>
<div class="a " style="left:652.5px;top:211px;font-size:12px;line-height:1.2;">Not created</div>
<div class="a " style="left:7px;top:230px;font-size:12px;line-height:1.2;">A.00.03.002</div>
<div class="a " style="left:107px;top:230px;font-size:12px;line-height:1.2;;transform:scaleX(0.9759);transform-origin:left">L0-013</div>
<div class="a " style="left:206.5px;top:230px;font-size:12px;line-height:1.2;;transform:scaleX(0.9155);transform-origin:left">CIRCULATION</div>
<div class="a " style="left:-20px;width:500px;top:230.00px;font-size:12px;line-height:1.2;text-align:right;">20.00</div>
<div class="a " style="left:40px;width:500px;top:230.00px;font-size:12px;line-height:1.2;text-align:right;">23.67</div>
<div class="a " style="left:552.5px;top:230px;font-size:12px;line-height:1.2;">Not created</div>
<div class="a " style="left:652.5px;top:230px;font-size:12px;line-height:1.2;">Not created</div>
<div class="a " style="left:7px;top:249px;font-size:12px;line-height:1.2;">A.00.03.003</div>
<div class="a " style="left:107px;top:249px;font-size:12px;line-height:1.2;;transform:scaleX(0.9759);transform-origin:left">L0-014</div>
<div class="a " style="left:206.5px;top:249px;font-size:12px;line-height:1.2;;transform:scaleX(0.9155);transform-origin:left">CIRCULATION</div>
<div class="a " style="left:-20px;width:500px;top:249.00px;font-size:12px;line-height:1.2;text-align:right;">20.00</div>
<div class="a " style="left:40px;width:500px;top:249.00px;font-size:12px;line-height:1.2;text-align:right;">20.76</div>
<div class="a " style="left:552.5px;top:249px;font-size:12px;line-height:1.2;">Not created</div>
<div class="a " style="left:652.5px;top:249px;font-size:12px;line-height:1.2;">Not created</div>
<div class="a " style="left:7px;top:268px;font-size:12px;line-height:1.2;">A.00.03.004</div>
<div class="a " style="left:107px;top:268px;font-size:12px;line-height:1.2;;transform:scaleX(0.9759);transform-origin:left">L0-015</div>
<div class="a " style="left:206.5px;top:268px;font-size:12px;line-height:1.2;;transform:scaleX(0.8662);transform-origin:left">LIFT</div>
<div class="a " style="left:-20px;width:500px;top:268.00px;font-size:12px;line-height:1.2;text-align:right;">6.00</div>
<div class="a " style="left:40px;width:500px;top:268.00px;font-size:12px;line-height:1.2;text-align:right;">6.34</div>
<div class="a " style="left:552.5px;top:268px;font-size:12px;line-height:1.2;">Not created</div>
<div class="a " style="left:652.5px;top:268px;font-size:12px;line-height:1.2;">Not created</div>
<div class="a " style="left:7px;top:287px;font-size:12px;line-height:1.2;">A.00.03.005</div>
<div class="a " style="left:107px;top:287px;font-size:12px;line-height:1.2;;transform:scaleX(0.9759);transform-origin:left">L0-016</div>
<div class="a " style="left:206.5px;top:287px;font-size:12px;line-height:1.2;;transform:scaleX(0.8662);transform-origin:left">LIFT</div>
<div class="a " style="left:-20px;width:500px;top:287.00px;font-size:12px;line-height:1.2;text-align:right;">6.00</div>
<div class="a " style="left:40px;width:500px;top:287.00px;font-size:12px;line-height:1.2;text-align:right;">6.29</div>
<div class="a " style="left:552.5px;top:287px;font-size:12px;line-height:1.2;">Not created</div>
<div class="a " style="left:652.5px;top:287px;font-size:12px;line-height:1.2;">Not created</div>
<div class="a " style="left:7px;top:306px;font-size:12px;line-height:1.2;">A.00.03.006</div>
<div class="a " style="left:107px;top:306px;font-size:12px;line-height:1.2;;transform:scaleX(0.9759);transform-origin:left">L0-017</div>
<div class="a " style="left:206.5px;top:306px;font-size:12px;line-height:1.2;;transform:scaleX(0.8662);transform-origin:left">LIFT</div>
<div class="a " style="left:-20px;width:500px;top:306.00px;font-size:12px;line-height:1.2;text-align:right;">6.00</div>
<div class="a " style="left:40px;width:500px;top:306.00px;font-size:12px;line-height:1.2;text-align:right;">5.59</div>
<div class="a " style="left:552.5px;top:306px;font-size:12px;line-height:1.2;">Not created</div>
<div class="a " style="left:652.5px;top:306px;font-size:12px;line-height:1.2;">Not created</div>
<div class="a " style="left:7px;top:325px;font-size:12px;line-height:1.2;">A.00.03.007</div>
<div class="a " style="left:107px;top:325px;font-size:12px;line-height:1.2;;transform:scaleX(0.9759);transform-origin:left">L0-018</div>
<div class="a " style="left:206.5px;top:325px;font-size:12px;line-height:1.2;;transform:scaleX(0.9173);transform-origin:left">PROMENADE</div>
<div class="a " style="left:-20px;width:500px;top:325.00px;font-size:12px;line-height:1.2;text-align:right;">60.00</div>
<div class="a " style="left:40px;width:500px;top:325.00px;font-size:12px;line-height:1.2;text-align:right;">61.21</div>
<div class="a " style="left:552.5px;top:325px;font-size:12px;line-height:1.2;">Not created</div>
<div class="a " style="left:652.5px;top:325px;font-size:12px;line-height:1.2;">Not created</div>
<div class="a " style="left:7px;top:344px;font-size:12px;line-height:1.2;">A.00.03.008</div>
<div class="a " style="left:107px;top:344px;font-size:12px;line-height:1.2;;transform:scaleX(0.9759);transform-origin:left">L0-019</div>
<div class="a " style="left:206.5px;top:344px;font-size:12px;line-height:1.2;;transform:scaleX(0.8173);transform-origin:left">RISER</div>
<div class="a " style="left:-20px;width:500px;top:344.00px;font-size:12px;line-height:1.2;text-align:right;">3.00</div>
<div class="a " style="left:40px;width:500px;top:344.00px;font-size:12px;line-height:1.2;text-align:right;">3.58</div>
<div class="a " style="left:552.5px;top:344px;font-size:12px;line-height:1.2;">Not created</div>
<div class="a " style="left:652.5px;top:344px;font-size:12px;line-height:1.2;">Not created</div>
<div class="a " style="left:7px;top:363px;font-size:12px;line-height:1.2;">A.00.03.009</div>
<div class="a " style="left:107px;top:363px;font-size:12px;line-height:1.2;;transform:scaleX(0.9759);transform-origin:left">L0-020</div>
<div class="a " style="left:206.5px;top:363px;font-size:12px;line-height:1.2;;transform:scaleX(0.8173);transform-origin:left">RISER</div>
<div class="a " style="left:-20px;width:500px;top:363.00px;font-size:12px;line-height:1.2;text-align:right;">3.00</div>
<div class="a " style="left:40px;width:500px;top:363.00px;font-size:12px;line-height:1.2;text-align:right;">2.59</div>
<div class="a " style="left:552.5px;top:363px;font-size:12px;line-height:1.2;">Not created</div>
<div class="a " style="left:652.5px;top:363px;font-size:12px;line-height:1.2;">Not created</div>
<div class="a " style="left:7px;top:382px;font-size:12px;line-height:1.2;">A.00.03.010</div>
<div class="a " style="left:107px;top:382px;font-size:12px;line-height:1.2;;transform:scaleX(0.9759);transform-origin:left">L0-021</div>
<div class="a " style="left:206.5px;top:382px;font-size:12px;line-height:1.2;;transform:scaleX(0.8173);transform-origin:left">RISER</div>
<div class="a " style="left:-20px;width:500px;top:382.00px;font-size:12px;line-height:1.2;text-align:right;">3.00</div>
<div class="a " style="left:40px;width:500px;top:382.00px;font-size:12px;line-height:1.2;text-align:right;">3.48</div>
<div class="a " style="left:552.5px;top:382px;font-size:12px;line-height:1.2;">Not created</div>
<div class="a " style="left:652.5px;top:382px;font-size:12px;line-height:1.2;">Not created</div>
<div class="a " style="left:7px;top:401px;font-size:12px;line-height:1.2;">A.00.03.011</div>
<div class="a " style="left:107px;top:401px;font-size:12px;line-height:1.2;;transform:scaleX(0.9759);transform-origin:left">L0-022</div>
<div class="a " style="left:206.5px;top:401px;font-size:12px;line-height:1.2;;transform:scaleX(0.8694);transform-origin:left">STAIR</div>
<div class="a " style="left:-20px;width:500px;top:401.00px;font-size:12px;line-height:1.2;text-align:right;">18.00</div>
<div class="a " style="left:40px;width:500px;top:401.00px;font-size:12px;line-height:1.2;text-align:right;">17.62</div>
<div class="a " style="left:552.5px;top:401px;font-size:12px;line-height:1.2;">Not created</div>
<div class="a " style="left:652.5px;top:401px;font-size:12px;line-height:1.2;">Not created</div>
<div class="a " style="left:7px;top:420px;font-size:12px;line-height:1.2;">A.00.03.012</div>
<div class="a " style="left:107px;top:420px;font-size:12px;line-height:1.2;;transform:scaleX(0.9759);transform-origin:left">L0-023</div>
<div class="a " style="left:206.5px;top:420px;font-size:12px;line-height:1.2;;transform:scaleX(0.8694);transform-origin:left">STAIR</div>
<div class="a " style="left:-20px;width:500px;top:420.00px;font-size:12px;line-height:1.2;text-align:right;">14.00</div>
<div class="a " style="left:40px;width:500px;top:420.00px;font-size:12px;line-height:1.2;text-align:right;">13.97</div>
<div class="a " style="left:552.5px;top:420px;font-size:12px;line-height:1.2;">Not created</div>
<div class="a " style="left:652.5px;top:420px;font-size:12px;line-height:1.2;">Not created</div>
<div class="a " style="left:7px;top:439px;font-size:12px;line-height:1.2;">A.00.03.013</div>
<div class="a " style="left:107px;top:439px;font-size:12px;line-height:1.2;;transform:scaleX(0.9759);transform-origin:left">L0-024</div>
<div class="a " style="left:206.5px;top:439px;font-size:12px;line-height:1.2;;transform:scaleX(0.8492);transform-origin:left">STORE</div>
<div class="a " style="left:-20px;width:500px;top:439.00px;font-size:12px;line-height:1.2;text-align:right;">5.00</div>
<div class="a " style="left:40px;width:500px;top:439.00px;font-size:12px;line-height:1.2;text-align:right;">5.37</div>
<div class="a " style="left:552.5px;top:439px;font-size:12px;line-height:1.2;">Not created</div>
<div class="a " style="left:652.5px;top:439px;font-size:12px;line-height:1.2;">Not created</div>
<div class="a " style="left:7px;top:458px;font-size:12px;line-height:1.2;">A.01.01.001</div>
<div class="a " style="left:107px;top:458px;font-size:12px;line-height:1.2;;transform:scaleX(0.9759);transform-origin:left">L1-001</div>
<div class="a " style="left:206.5px;top:458px;font-size:12px;line-height:1.2;;transform:scaleX(0.9112);transform-origin:left">BRISBANE ROOM</div>
<div class="a " style="left:-20px;width:500px;top:458.00px;font-size:12px;line-height:1.2;text-align:right;">42.00</div>
<div class="a " style="left:40px;width:500px;top:458.00px;font-size:12px;line-height:1.2;text-align:right;">40.86</div>
<div class="a " style="left:552.5px;top:458px;font-size:12px;line-height:1.2;">Not created</div>
<div class="a " style="left:652.5px;top:458px;font-size:12px;line-height:1.2;">Not created</div>
<div class="a " style="left:7px;top:477px;font-size:12px;line-height:1.2;">A.01.01.002</div>
<div class="a " style="left:107px;top:477px;font-size:12px;line-height:1.2;;transform:scaleX(0.9759);transform-origin:left">L1-002</div>
<div class="a " style="left:206.5px;top:477px;font-size:12px;line-height:1.2;;transform:scaleX(0.9120);transform-origin:left">SYDNEY ROOM</div>
<div class="a " style="left:-20px;width:500px;top:477.00px;font-size:12px;line-height:1.2;text-align:right;">42.00</div>
<div class="a " style="left:40px;width:500px;top:477.00px;font-size:12px;line-height:1.2;text-align:right;">44.14</div>
<div class="a " style="left:552.5px;top:477px;font-size:12px;line-height:1.2;">Not created</div>
<div class="a " style="left:652.5px;top:477px;font-size:12px;line-height:1.2;">Not created</div>
<div class="a " style="left:7px;top:496px;font-size:12px;line-height:1.2;">A.01.01.003</div>
<div class="a " style="left:107px;top:496px;font-size:12px;line-height:1.2;;transform:scaleX(0.9759);transform-origin:left">L1-003</div>
<div class="a " style="left:206.5px;top:496px;font-size:12px;line-height:1.2;;transform:scaleX(0.9271);transform-origin:left">MELBOURNE ROOM</div>
<div class="a " style="left:-20px;width:500px;top:496.00px;font-size:12px;line-height:1.2;text-align:right;">45.00</div>
<div class="a " style="left:40px;width:500px;top:496.00px;font-size:12px;line-height:1.2;text-align:right;">47.73</div>
<div class="a " style="left:552.5px;top:496px;font-size:12px;line-height:1.2;">Not created</div>
<div class="a " style="left:652.5px;top:496px;font-size:12px;line-height:1.2;">Not created</div>
<div class="a " style="left:7px;top:515px;font-size:12px;line-height:1.2;">A.01.02.001</div>
<div class="a " style="left:107px;top:515px;font-size:12px;line-height:1.2;;transform:scaleX(0.9759);transform-origin:left">L1-004</div>
<div class="a " style="left:206.5px;top:515px;font-size:12px;line-height:1.2;;transform:scaleX(0.8929);transform-origin:left">EXHIBITION SPACE</div>
<div class="a " style="left:-20px;width:500px;top:515.00px;font-size:12px;line-height:1.2;text-align:right;">150.00</div>
<div class="a " style="left:40px;width:500px;top:515.00px;font-size:12px;line-height:1.2;text-align:right;">158.47</div>
<div class="a " style="left:552.5px;top:515px;font-size:12px;line-height:1.2;">Not created</div>
<div class="a " style="left:652.5px;top:515px;font-size:12px;line-height:1.2;">Not created</div>
<div class="a " style="left:7px;top:534px;font-size:12px;line-height:1.2;">A.01.02.002</div>
<div class="a " style="left:107px;top:534px;font-size:12px;line-height:1.2;;transform:scaleX(0.9759);transform-origin:left">L1-005</div>
<div class="a " style="left:206.5px;top:534px;font-size:12px;line-height:1.2;;transform:scaleX(0.9339);transform-origin:left">MALE WC</div>
<div class="a " style="left:-20px;width:500px;top:534.00px;font-size:12px;line-height:1.2;text-align:right;">30.00</div>
<div class="a " style="left:40px;width:500px;top:534.00px;font-size:12px;line-height:1.2;text-align:right;">32.02</div>
<div class="a " style="left:552.5px;top:534px;font-size:12px;line-height:1.2;">Not created</div>
<div class="a " style="left:652.5px;top:534px;font-size:12px;line-height:1.2;">Not created</div>
<div class="a " style="left:7px;top:553px;font-size:12px;line-height:1.2;">A.01.02.003</div>
<div class="a " style="left:107px;top:553px;font-size:12px;line-height:1.2;;transform:scaleX(0.9759);transform-origin:left">L1-006</div>
<div class="a " style="left:206.5px;top:553px;font-size:12px;line-height:1.2;;transform:scaleX(0.9047);transform-origin:left">FEMALE WC</div>
<div class="a " style="left:-20px;width:500px;top:553.00px;font-size:12px;line-height:1.2;text-align:right;">30.00</div>
<div class="a " style="left:40px;width:500px;top:553.00px;font-size:12px;line-height:1.2;text-align:right;">30.38</div>
<div class="a " style="left:552.5px;top:553px;font-size:12px;line-height:1.2;">Not created</div>
<div class="a " style="left:652.5px;top:553px;font-size:12px;line-height:1.2;">Not created</div>
<div class="a " style="left:7px;top:572px;font-size:12px;line-height:1.2;">A.01.02.004</div>
<div class="a " style="left:107px;top:572px;font-size:12px;line-height:1.2;;transform:scaleX(0.9759);transform-origin:left">L1-007</div>
<div class="a " style="left:206.5px;top:572px;font-size:12px;line-height:1.2;;transform:scaleX(0.9270);transform-origin:left">SIGN-IN/SMALL EXHIBITION</div>
<div class="a " style="left:-20px;width:500px;top:572.00px;font-size:12px;line-height:1.2;text-align:right;">90.00</div>
<div class="a " style="left:40px;width:500px;top:572.00px;font-size:12px;line-height:1.2;text-align:right;">93.37</div>
<div class="a " style="left:552.5px;top:572px;font-size:12px;line-height:1.2;">Not created</div>
<div class="a " style="left:652.5px;top:572px;font-size:12px;line-height:1.2;">Not created</div>
<div class="a " style="left:7px;top:590px;font-size:12px;line-height:1.2;">A.01.03.001</div>
<div class="a " style="left:107px;top:590px;font-size:12px;line-height:1.2;;transform:scaleX(0.9759);transform-origin:left">L1-008</div>
<div class="a " style="left:206.5px;top:590px;font-size:12px;line-height:1.2;;transform:scaleX(0.9155);transform-origin:left">CIRCULATION</div>
<div class="a " style="left:-20px;width:500px;top:590.00px;font-size:12px;line-height:1.2;text-align:right;">0.00</div>
<div class="a " style="left:40px;width:500px;top:590.00px;font-size:12px;line-height:1.2;text-align:right;">160.80</div>
<div class="a " style="left:552.5px;top:590px;font-size:12px;line-height:1.2;">Not created</div>
<div class="a " style="left:652.5px;top:590px;font-size:12px;line-height:1.2;">Not created</div>
<div class="a " style="left:7px;top:609px;font-size:12px;line-height:1.2;">A.01.03.002</div>
<div class="a " style="left:107px;top:609px;font-size:12px;line-height:1.2;;transform:scaleX(0.9759);transform-origin:left">L1-009</div>
<div class="a " style="left:206.5px;top:609px;font-size:12px;line-height:1.2;;transform:scaleX(0.8662);transform-origin:left">LIFT</div>
<div class="a " style="left:-20px;width:500px;top:609.00px;font-size:12px;line-height:1.2;text-align:right;">6.00</div>
<div class="a " style="left:40px;width:500px;top:609.00px;font-size:12px;line-height:1.2;text-align:right;">6.34</div>
<div class="a " style="left:552.5px;top:609px;font-size:12px;line-height:1.2;">Not created</div>
<div class="a " style="left:652.5px;top:609px;font-size:12px;line-height:1.2;">Not created</div>
<div class="a " style="left:7px;top:628px;font-size:12px;line-height:1.2;">A.01.03.003</div>
<div class="a " style="left:107px;top:628px;font-size:12px;line-height:1.2;;transform:scaleX(0.9759);transform-origin:left">L1-010</div>
<div class="a " style="left:206.5px;top:628px;font-size:12px;line-height:1.2;;transform:scaleX(0.8662);transform-origin:left">LIFT</div>
<div class="a " style="left:-20px;width:500px;top:628.00px;font-size:12px;line-height:1.2;text-align:right;">6.00</div>
<div class="a " style="left:40px;width:500px;top:628.00px;font-size:12px;line-height:1.2;text-align:right;">6.29</div>
<div class="a " style="left:552.5px;top:628px;font-size:12px;line-height:1.2;">Not created</div>
<div class="a " style="left:652.5px;top:628px;font-size:12px;line-height:1.2;">Not created</div>
<div class="a " style="left:7px;top:647px;font-size:12px;line-height:1.2;">A.01.03.004</div>
<div class="a " style="left:107px;top:647px;font-size:12px;line-height:1.2;;transform:scaleX(0.9753);transform-origin:left">L1-011</div>
<div class="a " style="left:206.5px;top:647px;font-size:12px;line-height:1.2;;transform:scaleX(0.8173);transform-origin:left">RISER</div>
<div class="a " style="left:-20px;width:500px;top:647.00px;font-size:12px;line-height:1.2;text-align:right;">3.00</div>
<div class="a " style="left:40px;width:500px;top:647.00px;font-size:12px;line-height:1.2;text-align:right;">3.58</div>
<div class="a " style="left:552.5px;top:647px;font-size:12px;line-height:1.2;">Not created</div>
<div class="a " style="left:652.5px;top:647px;font-size:12px;line-height:1.2;">Not created</div>
<div class="a " style="left:7px;top:666px;font-size:12px;line-height:1.2;">A.01.03.005</div>
<div class="a " style="left:107px;top:666px;font-size:12px;line-height:1.2;;transform:scaleX(0.9759);transform-origin:left">L1-012</div>
<div class="a " style="left:206.5px;top:666px;font-size:12px;line-height:1.2;;transform:scaleX(0.8694);transform-origin:left">STAIR</div>
<div class="a " style="left:-20px;width:500px;top:666.00px;font-size:12px;line-height:1.2;text-align:right;">14.00</div>
<div class="a " style="left:40px;width:500px;top:666.00px;font-size:12px;line-height:1.2;text-align:right;">14.89</div>
<div class="a " style="left:552.5px;top:666px;font-size:12px;line-height:1.2;">Not created</div>
<div class="a " style="left:652.5px;top:666px;font-size:12px;line-height:1.2;">Not created</div>
<div class="a " style="left:7px;top:685px;font-size:12px;line-height:1.2;">A.01.03.006</div>
<div class="a " style="left:107px;top:685px;font-size:12px;line-height:1.2;;transform:scaleX(0.9759);transform-origin:left">L1-013</div>
<div class="a " style="left:206.5px;top:685px;font-size:12px;line-height:1.2;;transform:scaleX(0.8173);transform-origin:left">RISER</div>
<div class="a " style="left:-20px;width:500px;top:685.00px;font-size:12px;line-height:1.2;text-align:right;">3.00</div>
<div class="a " style="left:40px;width:500px;top:685.00px;font-size:12px;line-height:1.2;text-align:right;">2.85</div>
<div class="a " style="left:552.5px;top:685px;font-size:12px;line-height:1.2;">Not created</div>
<div class="a " style="left:652.5px;top:685px;font-size:12px;line-height:1.2;">Not created</div>
<div class="a " style="left:7px;top:704px;font-size:12px;line-height:1.2;">A.01.03.007</div>
<div class="a " style="left:107px;top:704px;font-size:12px;line-height:1.2;;transform:scaleX(0.9759);transform-origin:left">L1-014</div>
<div class="a " style="left:206.5px;top:704px;font-size:12px;line-height:1.2;;transform:scaleX(0.8662);transform-origin:left">LIFT</div>
<div class="a " style="left:-20px;width:500px;top:704.00px;font-size:12px;line-height:1.2;text-align:right;">6.00</div>
<div class="a " style="left:40px;width:500px;top:704.00px;font-size:12px;line-height:1.2;text-align:right;">5.59</div>
<div class="a " style="left:552.5px;top:704px;font-size:12px;line-height:1.2;">Not created</div>
<div class="a " style="left:652.5px;top:704px;font-size:12px;line-height:1.2;">Not created</div>
<div class="a " style="left:7px;top:723px;font-size:12px;line-height:1.2;">A.01.03.008</div>
<div class="a " style="left:107px;top:723px;font-size:12px;line-height:1.2;;transform:scaleX(0.9759);transform-origin:left">L1-015</div>
<div class="a " style="left:206.5px;top:723px;font-size:12px;line-height:1.2;;transform:scaleX(0.8173);transform-origin:left">RISER</div>
<div class="a " style="left:-20px;width:500px;top:723.00px;font-size:12px;line-height:1.2;text-align:right;">3.00</div>
<div class="a " style="left:40px;width:500px;top:723.00px;font-size:12px;line-height:1.2;text-align:right;">3.48</div>
<div class="a " style="left:552.5px;top:723px;font-size:12px;line-height:1.2;">Not created</div>
<div class="a " style="left:652.5px;top:723px;font-size:12px;line-height:1.2;">Not created</div>
<div class="a " style="left:7px;top:742px;font-size:12px;line-height:1.2;">A.01.03.009</div>
<div class="a " style="left:107px;top:742px;font-size:12px;line-height:1.2;;transform:scaleX(0.9759);transform-origin:left">L1-016</div>
<div class="a " style="left:206.5px;top:742px;font-size:12px;line-height:1.2;;transform:scaleX(0.8492);transform-origin:left">STORE</div>
<div class="a " style="left:-20px;width:500px;top:742.00px;font-size:12px;line-height:1.2;text-align:right;">5.00</div>
<div class="a " style="left:40px;width:500px;top:742.00px;font-size:12px;line-height:1.2;text-align:right;">5.37</div>
<div class="a " style="left:552.5px;top:742px;font-size:12px;line-height:1.2;">Not created</div>
<div class="a " style="left:652.5px;top:742px;font-size:12px;line-height:1.2;">Not created</div>
<div class="a " style="left:7px;top:761px;font-size:12px;line-height:1.2;">A.02.01.001</div>
<div class="a " style="left:107px;top:761px;font-size:12px;line-height:1.2;;transform:scaleX(0.9759);transform-origin:left">L2-001</div>
<div class="a " style="left:206.5px;top:761px;font-size:12px;line-height:1.2;;transform:scaleX(0.8852);transform-origin:left">OFFICE 1</div>
<div class="a " style="left:-20px;width:500px;top:761.00px;font-size:12px;line-height:1.2;text-align:right;">95.00</div>
<div class="a " style="left:40px;width:500px;top:761.00px;font-size:12px;line-height:1.2;text-align:right;">93.53</div>
<div class="a " style="left:552.5px;top:761px;font-size:12px;line-height:1.2;">Not created</div>
<div class="a " style="left:652.5px;top:761px;font-size:12px;line-height:1.2;">Not created</div>
<div class="a " style="left:7px;top:780px;font-size:12px;line-height:1.2;">A.02.01.002</div>
<div class="a " style="left:107px;top:780px;font-size:12px;line-height:1.2;;transform:scaleX(0.9759);transform-origin:left">L2-002</div>
<div class="a " style="left:206.5px;top:780px;font-size:12px;line-height:1.2;;transform:scaleX(0.8852);transform-origin:left">OFFICE 2</div>
<div class="a " style="left:-20px;width:500px;top:780.00px;font-size:12px;line-height:1.2;text-align:right;">80.00</div>
<div class="a " style="left:40px;width:500px;top:780.00px;font-size:12px;line-height:1.2;text-align:right;">80.25</div>
<div class="a " style="left:552.5px;top:780px;font-size:12px;line-height:1.2;">Not created</div>
<div class="a " style="left:652.5px;top:780px;font-size:12px;line-height:1.2;">Not created</div>
</div>
<div class="a" style="left:1099px;top:167px;width:17px;height:807px;background:#f0f0f0"></div>
<div class="a" style="left:1099px;top:184px;width:17px;height:317px;background:#cdcdcd"></div>
<svg class="a" style="left:1102px;top:172px;" width="11" height="8" viewBox="0 0 11 8"><path d="M1 6.5 L5.5 2 L10 6.5" fill="none" stroke="#8a8a8a" stroke-width="1.1"/></svg>
<svg class="a" style="left:1102px;top:962px;" width="11" height="8" viewBox="0 0 11 8"><path d="M1 1.5 L5.5 6 L10 1.5" fill="none" stroke="#8a8a8a" stroke-width="1.1"/></svg>
<div class="a" style="left:374px;top:974px;width:725px;height:17px;background:#f0f0f0"></div>
<div class="a" style="left:391px;top:974px;width:436px;height:17px;background:#cdcdcd"></div>
<svg class="a" style="left:379px;top:977px;" width="8" height="11" viewBox="0 0 8 11"><path d="M6 1 L1.5 5.5 L6 10" fill="none" stroke="#8a8a8a" stroke-width="1.1"/></svg>
<svg class="a" style="left:1087px;top:977px;" width="8" height="11" viewBox="0 0 8 11"><path d="M2 1 L6.5 5.5 L2 10" fill="none" stroke="#8a8a8a" stroke-width="1.1"/></svg>
<div class="a" style="left:1099px;top:974px;width:17px;height:17px;background:#efefef"></div>
<div class="a" style="left:374px;top:991px;width:742px;height:23px;background:#f4f4f4"></div>
<div class="a " style="left:379.5px;top:998px;font-size:9.6px;line-height:1.2;color:#ff1a1a">100 of 271</div>
<div class="a " style="left:441px;top:998px;font-size:9.6px;line-height:1.2;;transform:scaleX(0.9625);transform-origin:left">Show all</div>
<div class="a " style="left:437.5px;width:500px;top:997.58px;font-size:9.95px;line-height:1.2;text-align:right;;transform:scaleX(0.9821);transform-origin:right">Sum Programmed Area: 4,220.00</div>
<div class="a " style="left:586px;width:500px;top:997.68px;font-size:9.85px;line-height:1.2;text-align:right;;transform:scaleX(0.9869);transform-origin:right">Sum Designed Area: 5,535.37</div>
<svg class="a" style="left:1099px;top:996px;" width="15" height="15" viewBox="0 0 15 15"><rect x="0.5" y="2" width="4.5" height="11.5" fill="#fff" stroke="#777" stroke-width="0.9"/><rect x="9.5" y="2" width="4.5" height="11.5" fill="#fff" stroke="#777" stroke-width="0.9"/><rect x="5" y="0.5" width="4.5" height="11" fill="#e0502c" stroke="#8a2a15" stroke-width="0.6"/></svg>
<div class="a" style="left:861px;top:165px;width:63px;height:811px;border:3px solid #ff3b3b;box-shadow:0 2px 4px rgba(0,0,0,.32), inset 0 2px 4px rgba(0,0,0,.22)"></div>
<div class="a" style="left:1121px;top:145px;width:498px;height:870px;background:#f4f4f4;border:1px solid #858585"></div>
<div class="a" style="left:1122px;top:146px;width:496px;height:21px;background:#f0f0f0;border-bottom:1px solid #9a9a9a"></div>
<div class="a " style="left:1125px;top:150px;font-size:12px;line-height:1.2;;transform:scaleX(0.9762);transform-origin:left">Properties</div>
<svg class="a" style="left:1583px;top:150px;" width="10" height="13" viewBox="0 0 10 13"><path d="M3.2 1.5 H6.8 V7 L8.3 8.3 H1.7 L3.2 7 Z" fill="#fff" stroke="#111" stroke-width="1.3" stroke-linejoin="round"/><path d="M5 8.5 V12.8" stroke="#111" stroke-width="1.2"/></svg>
<svg class="a" style="left:1602px;top:151px;" width="11" height="11" viewBox="0 0 11 11"><path d="M1.5 1.5 L9.5 9.5 M9.5 1.5 L1.5 9.5" stroke="#111" stroke-width="1.5"/></svg>
<svg class="a" style="left:1142px;top:176px;" width="33" height="32"><use href="#room"/></svg>
<div class="a " style="left:1189.5px;top:174px;font-size:15.2px;line-height:1.2;font-weight:bold;color:#111;letter-spacing:0.38px">Room A.00.01.001 / L0-001 RECEPTION</div>
<div class="a " style="left:1189.5px;top:195px;font-size:11.75px;line-height:1.2;font-style:italic;color:#222;transform:scaleX(0.9531);transform-origin:left">A.00.01: Building A / LEVEL 0 / Entry</div>
<div class="a " style="left:1189.5px;top:211px;font-size:11.75px;line-height:1.2;font-style:italic;color:#222;transform:scaleX(0.9865);transform-origin:left">Created: 3/08/2023 3:27:13 PM dRofus Administrator</div>
<div class="a " style="left:1189.5px;top:227px;font-size:11.75px;line-height:1.2;font-style:italic;color:#222;transform:scaleX(0.9945);transform-origin:left">Updated: 4/08/2023 11:51:37 AM dRofus Administrator</div>
<div class="a" style="left:1128px;top:251px;width:484px;height:222px;border:1px solid #d3dde6;border-radius:3px;box-shadow:inset 1px 1px 0 #fff,1px 1px 0 #fff"></div>
<div class="a" style="left:1133px;top:243px;width:121px;height:14px;background:#f4f4f4"></div>
<div class="a " style="left:1136.5px;top:244px;font-size:12px;line-height:1.2;font-weight:bold;color:#1e9ad6">Name and Numbers</div>
<div class="a " style="left:1138px;top:267px;font-size:12px;line-height:1.2;;transform:scaleX(0.9694);transform-origin:left">Room Function #</div>
<div class="a" style="left:1276px;top:264px;width:325px;height:23px;background:#f4f4f4;border:1px solid #a3a6aa"></div>
<div class="a " style="left:1138px;top:292px;font-size:12px;line-height:1.2;;transform:scaleX(0.9807);transform-origin:left">Room Name</div>
<div class="a" style="left:1276px;top:289px;width:325px;height:23px;background:#fff;border:1px solid #a3a6aa"></div>
<svg class="a" style="left:1587px;top:298px;" width="8" height="6" viewBox="0 0 8 6"><path d="M1 1 L4 4 L7 1" fill="none" stroke="#444" stroke-width="1"/></svg>
<div class="a " style="left:1138px;top:317px;font-size:12px;line-height:1.2;;transform:scaleX(0.9885);transform-origin:left">Room Name Description</div>
<div class="a" style="left:1276px;top:314px;width:325px;height:23px;background:#fff;border:1px solid #a3a6aa"></div>
<svg class="a" style="left:1587px;top:323px;" width="8" height="6" viewBox="0 0 8 6"><path d="M1 1 L4 4 L7 1" fill="none" stroke="#444" stroke-width="1"/></svg>
<div class="a " style="left:1138px;top:342px;font-size:12px;line-height:1.2;;transform:scaleX(0.9833);transform-origin:left">Room Number</div>
<div class="a" style="left:1276px;top:339px;width:325px;height:23px;background:#fff;border:1px solid #a3a6aa"></div>
<div class="a " style="left:1138px;top:367px;font-size:12px;line-height:1.2;;transform:scaleX(0.9859);transform-origin:left">User Room Number</div>
<div class="a" style="left:1276px;top:364px;width:325px;height:23px;background:#fff;border:1px solid #a3a6aa"></div>
<div class="a " style="left:1138px;top:392px;font-size:12px;line-height:1.2;">Additional Number:</div>
<div class="a" style="left:1276px;top:389px;width:325px;height:23px;background:#fff;border:1px solid #a3a6aa"></div>
<div class="a " style="left:1138px;top:417px;font-size:12px;line-height:1.2;">Name on Drawing</div>
<div class="a" style="left:1276px;top:414px;width:325px;height:23px;background:#fff;border:1px solid #a3a6aa"></div>
<div class="a " style="left:1138px;top:442px;font-size:12px;line-height:1.2;;transform:scaleX(0.9632);transform-origin:left">Custom Field</div>
<div class="a" style="left:1276px;top:439px;width:325px;height:23px;background:#fff;border:1px solid #a3a6aa"></div>
<div class="a " style="left:1279px;top:267px;font-size:12px;line-height:1.2;color:#222">A.00.01.001</div>
<div class="a " style="left:1281px;top:294px;font-size:12px;line-height:1.2;;transform:scaleX(0.8729);transform-origin:left">RECEPTION</div>
<div class="a " style="left:1279px;top:342px;font-size:12px;line-height:1.2;;transform:scaleX(0.9759);transform-origin:left">L0-001</div>
<div class="a" style="left:1128px;top:484px;width:484px;height:99px;border:1px solid #d3dde6;border-radius:3px;box-shadow:inset 1px 1px 0 #fff,1px 1px 0 #fff"></div>
<div class="a" style="left:1133px;top:476px;width:38px;height:14px;background:#f4f4f4"></div>
<div class="a " style="left:1136.5px;top:477px;font-size:12px;line-height:1.2;font-weight:bold;color:#1e9ad6;transform:scaleX(1.0075);transform-origin:left">Note</div>
<div class="a" style="left:1141px;top:497px;width:460px;height:75px;background:#fffde0;border:1px solid #a3a3a3"></div>
<div class="a" style="left:1128px;top:594px;width:484px;height:97px;border:1px solid #d3dde6;border-radius:3px;box-shadow:inset 1px 1px 0 #fff,1px 1px 0 #fff"></div>
<div class="a" style="left:1133px;top:586px;width:54px;height:14px;background:#f4f4f4"></div>
<div class="a " style="left:1136.5px;top:587px;font-size:12px;line-height:1.2;font-weight:bold;color:#1e9ad6;transform:scaleX(0.9742);transform-origin:left">Groups</div>
<div class="a " style="left:1138px;top:610px;font-size:12px;line-height:1.2;;transform:scaleX(0.9752);transform-origin:left">Construction Phase</div>
<div class="a" style="left:1276px;top:607px;width:325px;height:23px;background:linear-gradient(#f0f0f0,#e3e3e3);border:1px solid #acacac"></div>
<svg class="a" style="left:1587px;top:616px;" width="8" height="6" viewBox="0 0 8 6"><path d="M1 1 L4 4 L7 1" fill="none" stroke="#444" stroke-width="1"/></svg>
<div class="a " style="left:1138px;top:635px;font-size:12px;line-height:1.2;;transform:scaleX(1.0153);transform-origin:left">Model</div>
<div class="a" style="left:1276px;top:632px;width:325px;height:23px;background:linear-gradient(#f0f0f0,#e3e3e3);border:1px solid #acacac"></div>
<svg class="a" style="left:1587px;top:641px;" width="8" height="6" viewBox="0 0 8 6"><path d="M1 1 L4 4 L7 1" fill="none" stroke="#444" stroke-width="1"/></svg>
<div class="a " style="left:1138px;top:660px;font-size:12px;line-height:1.2;;transform:scaleX(0.9588);transform-origin:left">Space Type</div>
<div class="a" style="left:1276px;top:657px;width:325px;height:23px;background:linear-gradient(#f0f0f0,#e3e3e3);border:1px solid #acacac"></div>
<svg class="a" style="left:1587px;top:666px;" width="8" height="6" viewBox="0 0 8 6"><path d="M1 1 L4 4 L7 1" fill="none" stroke="#444" stroke-width="1"/></svg>
<div class="a " style="left:1282px;top:637px;font-size:12px;line-height:1.2;;transform:scaleX(1.0069);transform-origin:left">Model A</div>
<div class="a" style="left:1128px;top:702px;width:484px;height:247px;border:1px solid #d3dde6;border-radius:3px;box-shadow:inset 1px 1px 0 #fff,1px 1px 0 #fff"></div>
<div class="a" style="left:1133px;top:694px;width:154px;height:14px;background:#f4f4f4"></div>
<div class="a " style="left:1136.5px;top:695px;font-size:12px;line-height:1.2;font-weight:bold;color:#1e9ad6">Areas and Measurements</div>
<div class="a " style="left:1138px;top:718px;font-size:12px;line-height:1.2;;transform:scaleX(0.9846);transform-origin:left">Programmed Area</div>
<div class="a" style="left:1276px;top:715px;width:120px;height:23px;background:#fff;border:1px solid #a3a6aa"></div>
<div class="a " style="left:893px;width:500px;top:718.04px;font-size:12px;line-height:1.2;text-align:right;">65.00</div>
<div class="a " style="left:1403.5px;top:718px;font-size:12px;line-height:1.2;">m<span style="font-size:8px;position:relative;top:-5px;margin-left:1px">2</span></div>
<div class="a " style="left:1138px;top:743px;font-size:12px;line-height:1.2;;transform:scaleX(0.9949);transform-origin:left">Designed Area</div>
<div class="a" style="left:1276px;top:740px;width:120px;height:23px;background:#fff;border:1px solid #a3a6aa"></div>
<div class="a " style="left:893px;width:500px;top:743.04px;font-size:12px;line-height:1.2;text-align:right;">62.04</div>
<div class="a " style="left:1403.5px;top:743px;font-size:12px;line-height:1.2;">m<span style="font-size:8px;position:relative;top:-5px;margin-left:1px">2</span></div>
<div class="a " style="left:1138px;top:768px;font-size:12px;line-height:1.2;;transform:scaleX(0.9813);transform-origin:left">Ceiling Height</div>
<div class="a" style="left:1276px;top:765px;width:120px;height:23px;background:#fff;border:1px solid #a3a6aa"></div>
<div class="a " style="left:893px;width:500px;top:768.04px;font-size:12px;line-height:1.2;text-align:right;">2.44</div>
<div class="a " style="left:1403.5px;top:768px;font-size:12px;line-height:1.2;">m</div>
<div class="a " style="left:1138px;top:793px;font-size:12px;line-height:1.2;;transform:scaleX(0.9750);transform-origin:left">Perimeter</div>
<div class="a" style="left:1276px;top:790px;width:120px;height:23px;background:#fff;border:1px solid #a3a6aa"></div>
<div class="a " style="left:893px;width:500px;top:793.04px;font-size:12px;line-height:1.2;text-align:right;">32.28</div>
<div class="a " style="left:1403.5px;top:793px;font-size:12px;line-height:1.2;">m</div>
<div class="a " style="left:1138px;top:818px;font-size:12px;line-height:1.2;;transform:scaleX(0.9864);transform-origin:left">DA Area</div>
<div class="a" style="left:1276px;top:815px;width:120px;height:23px;background:#fff;border:1px solid #a3a6aa"></div>
<div class="a " style="left:893px;width:500px;top:818.04px;font-size:12px;line-height:1.2;text-align:right;">0.00</div>
<div class="a " style="left:1138px;top:843px;font-size:12px;line-height:1.2;;transform:scaleX(0.9530);transform-origin:left">SD Area</div>
<div class="a" style="left:1276px;top:840px;width:120px;height:23px;background:#fff;border:1px solid #a3a6aa"></div>
<div class="a " style="left:893px;width:500px;top:843.04px;font-size:12px;line-height:1.2;text-align:right;">0.00</div>
<div class="a " style="left:1138px;top:868px;font-size:12px;line-height:1.2;;transform:scaleX(0.9868);transform-origin:left">DD Area</div>
<div class="a" style="left:1276px;top:865px;width:120px;height:23px;background:#fff;border:1px solid #a3a6aa"></div>
<div class="a " style="left:893px;width:500px;top:868.04px;font-size:12px;line-height:1.2;text-align:right;">0.00</div>
<div class="a " style="left:1138px;top:893px;font-size:12px;line-height:1.2;;transform:scaleX(0.9625);transform-origin:left">CD Area</div>
<div class="a" style="left:1276px;top:890px;width:120px;height:23px;background:#fff;border:1px solid #a3a6aa"></div>
<div class="a " style="left:893px;width:500px;top:893.04px;font-size:12px;line-height:1.2;text-align:right;">0.00</div>
<div class="a " style="left:1138px;top:918px;font-size:12px;line-height:1.2;;transform:scaleX(0.9875);transform-origin:left">Volume</div>
<div class="a" style="left:1276px;top:915px;width:120px;height:23px;background:#fff;border:1px solid #a3a6aa"></div>
<div class="a " style="left:893px;width:500px;top:918.04px;font-size:12px;line-height:1.2;text-align:right;">0.00</div>
<div class="a" style="left:1275px;top:631px;width:327px;height:25px;border:3px solid #ff3b3b;box-shadow:0 2px 4px rgba(0,0,0,.32), inset 0 2px 4px rgba(0,0,0,.22)"></div>
<div class="a" style="left:1275px;top:738px;width:122px;height:76px;border:3px solid #ff3b3b;box-shadow:0 2px 4px rgba(0,0,0,.32), inset 0 2px 4px rgba(0,0,0,.22)"></div>
<div class="a" style="left:1438px;top:984px;width:80px;height:20px;background:#f4f4f4;border:1px solid #b9b9b9"></div>
<div class="a " style="left:1328px;width:300px;top:987.64px;font-size:12px;line-height:1.2;text-align:center;color:#8a8a8a;transform:scaleX(0.9930);transform-origin:center">Undo</div>
<div class="a" style="left:1528px;top:984px;width:80px;height:20px;background:#f4f4f4;border:1px solid #b9b9b9"></div>
<div class="a " style="left:1418px;width:300px;top:987.64px;font-size:12px;line-height:1.2;text-align:center;color:#8a8a8a;transform:scaleX(0.9378);transform-origin:center">Save</div>
<div class="a" style="left:1624px;top:140px;width:1px;height:880px;background:#9a9a9a"></div>
<div class="a" style="left:1625px;top:140px;width:55px;height:880px;background:#f4f4f4"></div>
<svg class="a" style="left:1632px;top:146px;" width="26" height="18" viewBox="0 0 26 18"><rect x="0.7" y="0.7" width="24.6" height="16.6" fill="#fff" stroke="#333" stroke-width="1.1"/><path d="M0.7 6 H25.3 M8.5 6 V17.3 M8.5 11.5 H25.3" stroke="#333" stroke-width="1"/></svg>
<svg class="a" style="left:1669px;top:153px;" width="6" height="4" viewBox="0 0 6 4"><path d="M0 0 H6 L3 3.5Z" fill="#222"/></svg>
<div class="a" style="left:1625px;top:173px;width:55px;height:33px;background:#dcdcdc"></div>
<div class="a" style="left:1676px;top:173px;width:4px;height:33px;background:#e0502c"></div>
<svg class="a" style="left:1638px;top:178px;" width="26" height="26" viewBox="0 0 26 26"><circle cx="13" cy="12.5" r="11.5" fill="#fff" stroke="#1a1a1a" stroke-width="1.3"/><circle cx="13" cy="7" r="1.6" fill="#1a1a1a"/><path d="M10.5 10.5 H14 V18.5 M10.5 18.5 H16" fill="none" stroke="#1a1a1a" stroke-width="1.6"/></svg>
<svg class="a" style="left:1640px;top:211px;" width="25" height="26" viewBox="0 0 25 26"><path d="M12.5 1 L24 6.5 V19.5 L12.5 25 L1 19.5 V6.5 Z" fill="#fff" stroke="#333" stroke-width="1.1" stroke-linejoin="round"/><path d="M7.5 5.5 H15 L18.5 9 V20 H7.5 Z" fill="#fff" stroke="#333" stroke-width="1" stroke-linejoin="round"/><path d="M15 5.5 V9 H18.5" fill="none" stroke="#333" stroke-width="0.8"/><path d="M9.5 11.5 H16.5 M9.5 14 H16.5 M9.5 16.5 H16.5" stroke="#333" stroke-width="0.9"/></svg>
<svg class="a" style="left:1640px;top:245px;" width="25" height="26" viewBox="0 0 25 26"><path d="M12.5 1 L24 6.5 V19.5 L12.5 25 L1 19.5 V6.5 Z" fill="#fff" stroke="#333" stroke-width="1.1" stroke-linejoin="round"/><path d="M12.5 1 V9 M1 19.5 L8 16.3 M24 19.5 L17 16.3" fill="none" stroke="#333" stroke-width="0.9"/><path d="M12.5 9 L17.5 11.5 V17.5 L12.5 20 L7.5 17.5 V11.5 Z M7.5 11.5 L12.5 14 L17.5 11.5 M12.5 14 V20" fill="#fff" stroke="#333" stroke-width="1" stroke-linejoin="round"/></svg>
<svg class="a" style="left:1640px;top:280px;" width="25" height="20" viewBox="0 0 25 20"><path d="M2.2 3.8 H9 L10.5 1 H19 L20.5 3.8 H23 Q24.3 3.8 24.3 5.2 V17 Q24.3 18.4 23 18.4 H2 Q0.7 18.4 0.7 17 V5.2 Q0.7 3.8 2.2 3.8 Z" fill="#fff" stroke="#333" stroke-width="1.1" stroke-linejoin="round"/><path d="M2.5 3.8 L3.5 1.8 H6 L6.8 3.8" fill="none" stroke="#333" stroke-width="0.9"/><circle cx="15.5" cy="10.8" r="5.3" fill="none" stroke="#333" stroke-width="1.1"/><circle cx="15.5" cy="10.8" r="3.2" fill="none" stroke="#333" stroke-width="1"/><circle cx="4.5" cy="7" r="1.1" fill="none" stroke="#333" stroke-width="0.8"/></svg>
<svg class="a" style="left:1640px;top:313px;" width="20" height="25" viewBox="0 0 20 25"><path d="M1 1 H12 L18.5 7.5 V24 H1 Z" fill="#fff" stroke="#333" stroke-width="1.1"/><path d="M12 1 V7.5 H18.5" fill="none" stroke="#333" stroke-width="0.9"/><path d="M6 13 V4 Q6 2 8 2 Q10 2 10 4 V15 Q10 18 7.5 18 Q5 18 5 15 V3" fill="none" stroke="#333" stroke-width="0.9"/></svg>
<svg class="a" style="left:1640px;top:348px;" width="20" height="25" viewBox="0 0 20 25"><path d="M1 1 H12 L18.5 7.5 V24 H1 Z" fill="#fff" stroke="#333" stroke-width="1.1"/><path d="M12 1 V7.5 H18.5" fill="none" stroke="#333" stroke-width="0.9"/><circle cx="9.5" cy="16" r="5" fill="none" stroke="#333" stroke-width="1"/><path d="M9.5 13 V16 H12" fill="none" stroke="#333" stroke-width="0.9"/></svg>
<svg class="a" style="left:1639px;top:381px;" width="24" height="21" viewBox="0 0 24 21"><path d="M3 20 V2 M1 4 L3 1.5 L5 4" fill="none" stroke="#333" stroke-width="1"/><path d="M3 19 H22 M20 17 L22.5 19 L20 21" fill="none" stroke="#333" stroke-width="1"/><rect x="4" y="10" width="13" height="8" fill="#8a8a8a"/></svg></body></html>
